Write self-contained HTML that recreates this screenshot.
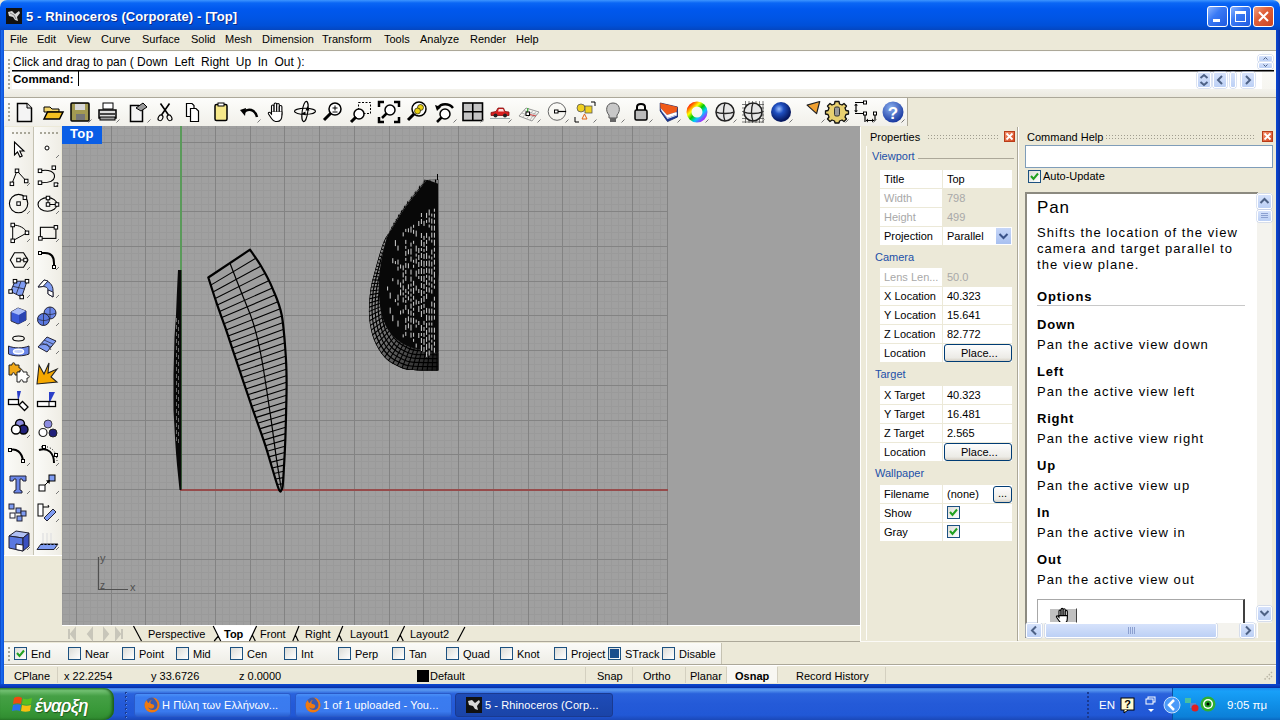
<!DOCTYPE html>
<html><head><meta charset="utf-8"><style>
*{margin:0;padding:0;box-sizing:border-box}
html,body{width:1280px;height:720px;overflow:hidden;background:#ece9d8;font-family:"Liberation Sans",sans-serif;font-size:11px;color:#000}
.a{position:absolute}
.t{position:absolute;white-space:pre;line-height:13px}
svg.a{overflow:visible}
</style></head><body>
<div class="a" style="left:0px;top:0px;width:1280px;height:30px;background:linear-gradient(#3d95ff 0%,#0a66f5 10%,#0058ee 30%,#0055e5 60%,#0050d8 85%,#0446c0 100%);border-radius:7px 7px 0 0"></div>
<svg class="a" style="left:6px;top:8px;" width="16" height="16" viewBox="0 0 16 16"><rect width="16" height="16" fill="#111"/><path d="M2 4 L6 3 L9 6 L13 3 L14 5 L11 9 L12 13 L9 12 L7 9 L3 8 Z" fill="#d8d8d8"/><path d="M4 5 L8 7 L10 11" stroke="#888" fill="none"/></svg>
<div class="t" style="left:26px;top:10px;font-size:13px;font-weight:bold;color:#fff;letter-spacing:0.1px;text-shadow:1px 1px 0 #0a2a8a">5 - Rhinoceros (Corporate) - [Top]</div>
<div class="a" style="left:1207px;top:6px;width:21px;height:21px;background:linear-gradient(135deg,#8ab4ff 0%,#3a7af5 40%,#1f5ae0 100%);border:1px solid #fff;border-radius:3px"></div>
<div class="a" style="left:1213px;top:19px;width:7px;height:3px;background:#fff"></div>
<div class="a" style="left:1230px;top:6px;width:21px;height:21px;background:linear-gradient(135deg,#8ab4ff 0%,#3a7af5 40%,#1f5ae0 100%);border:1px solid #fff;border-radius:3px"></div>
<div class="a" style="left:1235px;top:11px;width:11px;height:11px;border:1px solid #fff;border-top:3px solid #fff"></div>
<div class="a" style="left:1253px;top:6px;width:21px;height:21px;background:linear-gradient(135deg,#f0a080 0%,#e0603a 40%,#cc4420 100%);border:1px solid #fff;border-radius:3px"></div>
<svg class="a" style="left:1253px;top:6px;" width="21" height="21" viewBox="0 0 21 21"><path d="M6 6 L15 15 M15 6 L6 15" stroke="#fff" stroke-width="2"/></svg>
<div class="a" style="left:0px;top:30px;width:4px;height:658px;background:linear-gradient(90deg,#0a3fbc,#1a6cf0 40%,#0b50d8)"></div>
<div class="a" style="left:1276px;top:30px;width:4px;height:658px;background:linear-gradient(90deg,#0a48d0,#0a3cc0 50%,#0a2fa0)"></div>
<div class="a" style="left:0px;top:684px;width:1280px;height:4px;background:linear-gradient(#0b48d0,#0a3cc0 50%,#0a2f9f)"></div>
<div class="a" style="left:4px;top:30px;width:1272px;height:20px;background:#ece9d8"></div>
<div class="a" style="left:4px;top:50px;width:1272px;height:1px;background:#aca899"></div>
<div class="t" style="left:10px;top:33px;font-size:11px;color:#000;">File</div>
<div class="t" style="left:37px;top:33px;font-size:11px;color:#000;">Edit</div>
<div class="t" style="left:67px;top:33px;font-size:11px;color:#000;">View</div>
<div class="t" style="left:101px;top:33px;font-size:11px;color:#000;">Curve</div>
<div class="t" style="left:142px;top:33px;font-size:11px;color:#000;">Surface</div>
<div class="t" style="left:191px;top:33px;font-size:11px;color:#000;">Solid</div>
<div class="t" style="left:225px;top:33px;font-size:11px;color:#000;">Mesh</div>
<div class="t" style="left:262px;top:33px;font-size:11px;color:#000;">Dimension</div>
<div class="t" style="left:322px;top:33px;font-size:11px;color:#000;">Transform</div>
<div class="t" style="left:384px;top:33px;font-size:11px;color:#000;">Tools</div>
<div class="t" style="left:420px;top:33px;font-size:11px;color:#000;">Analyze</div>
<div class="t" style="left:470px;top:33px;font-size:11px;color:#000;">Render</div>
<div class="t" style="left:516px;top:33px;font-size:11px;color:#000;">Help</div>
<div class="a" style="left:4px;top:51px;width:1272px;height:46px;background:linear-gradient(#fcfcfa,#f5f4ee)"></div>
<div class="a" style="left:12px;top:52px;width:1250px;height:37px;background:#fff"></div>
<div class="a" style="left:4px;top:89px;width:1272px;height:8px;background:linear-gradient(#f3f2ec,#ebe9df)"></div>
<div class="a" style="left:4px;top:97px;width:1272px;height:1px;background:#aca899"></div>
<div class="a" style="left:8px;top:59px;width:2px;height:2px;background:#a8a698"></div>
<div class="a" style="left:8px;top:63px;width:2px;height:2px;background:#a8a698"></div>
<div class="a" style="left:8px;top:67px;width:2px;height:2px;background:#a8a698"></div>
<div class="a" style="left:8px;top:71px;width:2px;height:2px;background:#a8a698"></div>
<div class="a" style="left:8px;top:75px;width:2px;height:2px;background:#a8a698"></div>
<div class="a" style="left:8px;top:79px;width:2px;height:2px;background:#a8a698"></div>
<div class="a" style="left:8px;top:83px;width:2px;height:2px;background:#a8a698"></div>
<div class="a" style="left:8px;top:87px;width:2px;height:2px;background:#a8a698"></div>
<div class="t" style="left:13px;top:56px;font-size:12px;color:#000;">Click and drag to pan ( Down  Left  Right  Up  In  Out ):</div>
<div class="a" style="left:12px;top:70px;width:1262px;height:1px;background:#000"></div>
<div class="a" style="left:12px;top:71px;width:1262px;height:1px;background:#777"></div>
<div class="t" style="left:13px;top:72px;font-size:11.6px;font-weight:bold;color:#000;">Command:</div>
<div class="a" style="left:78px;top:71px;width:1px;height:15px;background:#000"></div>
<div class="a" style="left:1258px;top:55px;width:15px;height:7px;background:linear-gradient(#d6e2fb,#bcd0f5);border:1px solid #fff;border-radius:2px;box-shadow:0 0 0 0.5px #b8c8e8"></div>
<svg class="a" style="left:1258px;top:55px" width="15" height="7" viewBox="0 0 15 7"><path d="M5.5 4.5 L7.5 2.5 L9.5 4.5" stroke="#4d6185" fill="none"/></svg>
<div class="a" style="left:1258px;top:62px;width:15px;height:7px;background:linear-gradient(#d6e2fb,#bcd0f5);border:1px solid #fff;border-radius:2px;box-shadow:0 0 0 0.5px #b8c8e8"></div>
<svg class="a" style="left:1258px;top:62px" width="15" height="7" viewBox="0 0 15 7"><path d="M5.5 2.5 L7.5 4.5 L9.5 2.5" stroke="#4d6185" fill="none"/></svg>
<div class="a" style="left:1197px;top:72px;width:14px;height:16px;background:linear-gradient(#d6e2fb,#bcd0f5);border:1px solid #fff;border-radius:2px;box-shadow:0 0 0 0.5px #b8c8e8"></div>
<svg class="a" style="left:1197px;top:72px" width="14" height="16" viewBox="0 0 14 16"><path d="M3.5 6 L7 3 L10.5 6 M3.5 10 L7 13 L10.5 10" stroke="#4d6185" stroke-width="2" fill="none"/></svg>
<div class="a" style="left:1213px;top:72px;width:14px;height:16px;background:linear-gradient(#d6e2fb,#bcd0f5);border:1px solid #fff;border-radius:2px;box-shadow:0 0 0 0.5px #b8c8e8"></div>
<svg class="a" style="left:1213px;top:72px" width="14" height="16" viewBox="0 0 14 16"><path d="M9 4 L5 8 L9 12" stroke="#4d6185" stroke-width="2" fill="none"/></svg>
<div class="a" style="left:1230px;top:72px;width:6px;height:16px;background:linear-gradient(#d6e2fb,#bcd0f5);border:1px solid #fff;border-radius:2px;box-shadow:0 0 0 0.5px #b8c8e8"></div>
<div class="a" style="left:1241px;top:72px;width:14px;height:16px;background:linear-gradient(#d6e2fb,#bcd0f5);border:1px solid #fff;border-radius:2px;box-shadow:0 0 0 0.5px #b8c8e8"></div>
<svg class="a" style="left:1241px;top:72px" width="14" height="16" viewBox="0 0 14 16"><path d="M5 4 L9 8 L5 12" stroke="#4d6185" stroke-width="2" fill="none"/></svg>
<div class="a" style="left:4px;top:98px;width:903px;height:28px;background:linear-gradient(#fdfdfb,#f1f0ea)"></div>
<div class="a" style="left:907px;top:98px;width:369px;height:28px;background:#ece9d8"></div>
<div class="a" style="left:907px;top:97px;width:1px;height:29px;background:#aca899"></div>
<div class="a" style="left:4px;top:126px;width:1272px;height:1px;background:#aca899"></div>
<div class="a" style="left:8px;top:103px;width:2px;height:2px;background:#a8a698"></div>
<div class="a" style="left:8px;top:107px;width:2px;height:2px;background:#a8a698"></div>
<div class="a" style="left:8px;top:111px;width:2px;height:2px;background:#a8a698"></div>
<div class="a" style="left:8px;top:115px;width:2px;height:2px;background:#a8a698"></div>
<div class="a" style="left:8px;top:119px;width:2px;height:2px;background:#a8a698"></div>
<svg class="a" style="left:12px;top:100px" width="24" height="24" viewBox="0 0 24 24"><path d="M5.5 3.5 H15 L19.5 8 V21.5 H5.5 Z" fill="#f4f4f4" stroke="#000" stroke-width="1.5"/><path d="M15 3.5 V8 H19.5" fill="#ddd" stroke="#000"/></svg>
<svg class="a" style="left:41px;top:100px" width="24" height="24" viewBox="0 0 24 24"><path d="M3 7 H9 L11 9 H18 V12 H3 Z" fill="#f2d56a" stroke="#000"/><path d="M3 19 L6.5 12 H22 L18.5 19 Z" fill="#f4c020" stroke="#000" stroke-width="1.5"/></svg>
<svg class="a" style="left:68px;top:100px" width="24" height="24" viewBox="0 0 24 24"><rect x="3" y="3" width="18" height="18" rx="1" fill="#a39a52" stroke="#000" stroke-width="1.5"/><rect x="7" y="4" width="10" height="6" fill="#d8d8d8"/><rect x="8" y="14" width="9" height="6" fill="#777"/><path d="M20.5 22.5 L23.5 19.5" stroke="#777" stroke-width="1"/></svg>
<svg class="a" style="left:96px;top:100px" width="24" height="24" viewBox="0 0 24 24"><rect x="7" y="3" width="10" height="6" fill="#fff" stroke="#000"/><path d="M3 10 H20 V18 H3 Z" fill="#ddd" stroke="#000" stroke-width="1.5"/><rect x="4" y="13" width="15" height="2" fill="#444"/><rect x="4" y="17" width="15" height="3" fill="#999" stroke="#000"/><path d="M20.5 22.5 L23.5 19.5" stroke="#777" stroke-width="1"/></svg>
<svg class="a" style="left:127px;top:100px" width="24" height="24" viewBox="0 0 24 24"><path d="M3.5 5.5 H12 L15.5 9 V21.5 H3.5 Z" fill="#f4f4f4" stroke="#000" stroke-width="1.5"/><path d="M9 8 L16 3 L20 7 L14 11 Z" fill="#999" stroke="#000"/><path d="M20.5 22.5 L23.5 19.5" stroke="#777" stroke-width="1"/></svg>
<svg class="a" style="left:153px;top:100px" width="24" height="24" viewBox="0 0 24 24"><path d="M7.5 3.5 L15.5 15 M16.5 3.5 L8.5 15" stroke="#000" stroke-width="1.6"/><ellipse cx="7.5" cy="17.8" rx="2.2" ry="3" fill="none" stroke="#000" stroke-width="1.1" transform="rotate(30 7.5 17.8)"/><ellipse cx="16.5" cy="17.8" rx="2.2" ry="3" fill="none" stroke="#000" stroke-width="1.1" transform="rotate(-30 16.5 17.8)"/></svg>
<svg class="a" style="left:181px;top:100px" width="24" height="24" viewBox="0 0 24 24"><path d="M5.5 3.5 H11 L13 5.5 V16.5 H5.5 Z" fill="#fff" stroke="#000" stroke-width="1.2"/><path d="M9.5 8.5 H15 L17.5 11 V21.5 H9.5 Z" fill="#fff" stroke="#000" stroke-width="1.2"/></svg>
<svg class="a" style="left:209px;top:100px" width="24" height="24" viewBox="0 0 24 24"><rect x="6" y="4.5" width="12" height="16" rx="1.5" fill="#f7e98a" stroke="#000" stroke-width="1.5"/><rect x="9" y="3" width="6" height="3" fill="#fff" stroke="#000"/></svg>
<svg class="a" style="left:237px;top:100px" width="24" height="24" viewBox="0 0 24 24"><path d="M20 17 C18 9 11 8 7 12" stroke="#000" stroke-width="2.5" fill="none"/><path d="M3 10 L9 8 L8 16 Z" fill="#000"/><path d="M20.5 22.5 L23.5 19.5" stroke="#777" stroke-width="1"/></svg>
<svg class="a" style="left:264px;top:100px" width="24" height="24" viewBox="0 0 24 24"><g fill="#fff" stroke="#000" stroke-width="1.1"><rect x="7.5" y="5" width="2.6" height="10" rx="1.3"/><rect x="10.1" y="3" width="2.6" height="11" rx="1.3"/><rect x="12.7" y="3.5" width="2.6" height="11" rx="1.3"/><rect x="15.3" y="5.5" width="2.6" height="10" rx="1.3"/><path d="M7.5 12 H17.9 V15.5 C17.9 19 16 21.5 13 21.5 H11.5 C9.5 21.5 8.5 20 7.5 18.5 L4.5 14 C3.8 12.8 5.2 11.8 6.2 12.6 L7.5 14 Z"/></g><path d="M8 12.6 H17.4" stroke="#fff" stroke-width="1.5"/></svg>
<svg class="a" style="left:293px;top:100px" width="24" height="24" viewBox="0 0 24 24"><ellipse cx="12" cy="11.3" rx="10.5" ry="3" fill="none" stroke="#000" stroke-width="1.1"/><ellipse cx="12" cy="11.5" rx="2.8" ry="10.2" fill="none" stroke="#000" stroke-width="1.1" transform="rotate(8 12 11.5)"/><path d="M14.5 6 L16.5 10.5 L12.5 10.5 Z M8.5 13.5 L12.5 11.5 L12.5 15.5 Z" fill="#000"/></svg>
<svg class="a" style="left:321px;top:100px" width="24" height="24" viewBox="0 0 24 24"><circle cx="14" cy="9" r="6" fill="#fff" stroke="#000" stroke-width="1.5"/><path d="M10 13 L3 20" stroke="#000" stroke-width="3"/><path d="M11.5 8 H16.5 M14 5.5 V10.5 M11.5 12 H16.5" stroke="#000"/></svg>
<svg class="a" style="left:349px;top:100px" width="24" height="24" viewBox="0 0 24 24"><rect x="9.5" y="2.5" width="12" height="11" fill="none" stroke="#000" stroke-dasharray="2 1.5"/><circle cx="10" cy="14" r="5" fill="#fff" stroke="#000" stroke-width="1.5"/><path d="M7 17 L2 22" stroke="#000" stroke-width="3"/></svg>
<svg class="a" style="left:377px;top:100px" width="24" height="24" viewBox="0 0 24 24"><path d="M2 7 V2 H7 M17 2 H22 V7 M22 17 V22 H17 M7 22 H2 V17" stroke="#000" stroke-width="2.5" fill="none"/><circle cx="13" cy="10" r="5" fill="#fff" stroke="#000" stroke-width="1.5"/><path d="M9.5 13.5 L5 18" stroke="#000" stroke-width="2.5"/></svg>
<svg class="a" style="left:406px;top:100px" width="24" height="24" viewBox="0 0 24 24"><circle cx="13" cy="9" r="7" fill="#fff" stroke="#000" stroke-width="1.5"/><circle cx="14.5" cy="7.5" r="3" fill="#e8d010" stroke="#000" stroke-width="0.6"/><circle cx="11.5" cy="11" r="3" fill="#e8d010" stroke="#000" stroke-width="0.6"/><path d="M8 14 L2 20" stroke="#000" stroke-width="3"/></svg>
<svg class="a" style="left:433px;top:100px" width="24" height="24" viewBox="0 0 24 24"><path d="M20 8 C16 3 8 3 5 8" stroke="#000" stroke-width="2.5" fill="none"/><path d="M2 5 L8 7 L4 11 Z" fill="#000"/><circle cx="12" cy="14" r="5" fill="#fff" stroke="#000" stroke-width="1.5"/><path d="M8.5 17.5 L4 22" stroke="#000" stroke-width="2.5"/><path d="M20.5 22.5 L23.5 19.5" stroke="#777" stroke-width="1"/></svg>
<svg class="a" style="left:460px;top:100px" width="24" height="24" viewBox="0 0 24 24"><rect x="3" y="3" width="19.5" height="17.5" fill="#c4c4c4" stroke="#000" stroke-width="1.6"/><path d="M12.75 3 V20.5 M3 11.75 H22.5" stroke="#000" stroke-width="1.6"/><path d="M20.5 22.5 L23.5 19.5" stroke="#777" stroke-width="1"/></svg>
<svg class="a" style="left:488px;top:100px" width="24" height="24" viewBox="0 0 24 24"><path d="M3 15.5 V12.5 L8 11.5 L10 8 H15.5 L17 11.5 L21 12 V15.5 Z" fill="#d82020" stroke="#801010" stroke-width="0.8"/><circle cx="7.5" cy="15.5" r="2" fill="#222"/><circle cx="17" cy="15.5" r="2" fill="#222"/><path d="M10.8 9 H15 L16 11.5 H10 Z" fill="#fdd"/><path d="M2 18.5 H22" stroke="#9aa"/><path d="M20.5 22.5 L23.5 19.5" stroke="#777" stroke-width="1"/></svg>
<svg class="a" style="left:517px;top:100px" width="24" height="24" viewBox="0 0 24 24"><path d="M2 16 L9 8 L22 12 L15 21 Z" fill="none" stroke="#999"/><path d="M4.5 13 L18 17 M6.8 10.5 L20 14.5 M5.5 17.5 L12 9.5 M9.5 19 L16 10.5 M13 20 L19 11.5" stroke="#aaa" stroke-width="0.8"/><path d="M11 8 L10 13" stroke="#3a3" stroke-width="1.2"/><path d="M11 14 L19 16" stroke="#c44" stroke-width="1.2"/><rect x="9" y="12" width="3.5" height="3.5" fill="#fff" stroke="#000"/><path d="M20.5 22.5 L23.5 19.5" stroke="#777" stroke-width="1"/></svg>
<svg class="a" style="left:545px;top:100px" width="24" height="24" viewBox="0 0 24 24"><circle cx="12" cy="11.5" r="8.8" fill="none" stroke="#666" stroke-width="1"/><rect x="9.5" y="10" width="3.5" height="3" fill="#fff" stroke="#000"/><path d="M13 11.5 H21" stroke="#000" stroke-width="1.2"/><path d="M20.5 22.5 L23.5 19.5" stroke="#777" stroke-width="1"/></svg>
<svg class="a" style="left:573px;top:100px" width="24" height="24" viewBox="0 0 24 24"><circle cx="8" cy="8" r="4" fill="#f0d020" stroke="#555" stroke-width="0.8"/><rect x="12" y="6" width="7" height="7" fill="#f0d020" stroke="#555" stroke-width="0.8"/><path d="M9 19 L11.5 14 L14 19 Z" fill="none" stroke="#e06010"/><path d="M2 17 V22 H6 M18 2 H22 V6" stroke="#000" fill="none"/><path d="M20.5 22.5 L23.5 19.5" stroke="#777" stroke-width="1"/></svg>
<svg class="a" style="left:601px;top:100px" width="24" height="24" viewBox="0 0 24 24"><path d="M8 15 C4 11 5 3 12 3 C19 3 20 11 16 15 V18 H8 Z" fill="#c8c8c8" stroke="#555"/><rect x="9" y="18" width="6" height="4" fill="#666"/><path d="M20.5 22.5 L23.5 19.5" stroke="#777" stroke-width="1"/></svg>
<svg class="a" style="left:629px;top:100px" width="24" height="24" viewBox="0 0 24 24"><path d="M8 11 V7 C8 3 16 3 16 7 V11" stroke="#000" stroke-width="2" fill="none"/><rect x="6" y="10" width="12" height="10" rx="1.5" fill="#bbb" stroke="#000" stroke-width="1.5"/><path d="M20.5 22.5 L23.5 19.5" stroke="#777" stroke-width="1"/></svg>
<svg class="a" style="left:657px;top:100px" width="24" height="24" viewBox="0 0 24 24"><path d="M3.2 3 L20.5 7 V17 L10.5 21.6 L3.2 11 Z" fill="#1a3a9a" stroke="#102060" stroke-width="0.8"/><path d="M3.2 3 L20.5 7 L19.5 12 L10 15 L3.5 8 Z" fill="#f05a18"/><path d="M3.5 8 L10 15 L19.5 12 L20 14.5 L10.5 18 L4.5 11 Z" fill="#fff"/><path d="M4.5 11 L10.5 18 L20 14.5 V15.5 L10.5 19 Z" fill="#e0e0f0"/><path d="M20.5 22.5 L23.5 19.5" stroke="#777" stroke-width="1"/></svg>
<svg class="a" style="left:685px;top:100px" width="24" height="24" viewBox="0 0 24 24"><circle cx="12" cy="12" r="8" fill="none" stroke="url(#cw)" stroke-width="5"/><defs><linearGradient id="cw" x1="0" y1="0" x2="1" y2="1"><stop offset="0" stop-color="#f00"/><stop offset="0.3" stop-color="#ff0"/><stop offset="0.5" stop-color="#0c0"/><stop offset="0.7" stop-color="#0cf"/><stop offset="1" stop-color="#c0f"/></linearGradient></defs><path d="M20.5 22.5 L23.5 19.5" stroke="#777" stroke-width="1"/></svg>
<svg class="a" style="left:713px;top:100px" width="24" height="24" viewBox="0 0 24 24"><circle cx="12" cy="12" r="9" fill="#e6e6e6" stroke="#222" stroke-width="1.5"/><path d="M3 12 C7 14 17 14 21 12 M12 3 C10 8 10 16 12 21" stroke="#222" stroke-width="1.3" fill="none"/><path d="M20.5 22.5 L23.5 19.5" stroke="#777" stroke-width="1"/></svg>
<svg class="a" style="left:741px;top:100px" width="24" height="24" viewBox="0 0 24 24"><path d="M1 4.5 H23 M1 8 H23 M1 11.5 H23 M1 15 H23 M1 18.5 H23 M1 22 H23 M4.5 1 V23 M8 1 V23 M11.5 1 V23 M15 1 V23 M18.5 1 V23 M22 1 V23" stroke="#444" stroke-width="0.7"/><circle cx="12" cy="12" r="9" fill="#e6e6e6" stroke="#222" stroke-width="1.5"/><path d="M3 12 C7 14 17 14 21 12 M12 3 C10 8 10 16 12 21" stroke="#222" stroke-width="1.3" fill="none"/><path d="M20.5 22.5 L23.5 19.5" stroke="#777" stroke-width="1"/></svg>
<svg class="a" style="left:769px;top:100px" width="24" height="24" viewBox="0 0 24 24"><defs><radialGradient id="bs" cx="0.4" cy="0.35" r="0.6"><stop offset="0" stop-color="#9cc0ff"/><stop offset="0.4" stop-color="#1f4fc0"/><stop offset="1" stop-color="#061860"/></radialGradient></defs><circle cx="12" cy="12" r="10" fill="url(#bs)"/><path d="M20.5 22.5 L23.5 19.5" stroke="#777" stroke-width="1"/></svg>
<svg class="a" style="left:801px;top:100px" width="24" height="24" viewBox="0 0 24 24"><path d="M6.1 5.1 L18.7 1.5 L15.6 13.6 Z" fill="#f0a030" stroke="#222" stroke-width="1.2" stroke-linejoin="round"/><path d="M20.5 22.5 L23.5 19.5" stroke="#777" stroke-width="1"/></svg>
<svg class="a" style="left:825px;top:100px" width="24" height="24" viewBox="0 0 24 24"><path d="M10 1.5 H14 L14.5 4 L17 5 L19 3.5 L21.5 6 L20 8 L21 10.5 L23.5 11 V14 L21 14.5 L20 17 L21.5 19 L19 21.5 L17 20 L14.5 21 L14 23 H10 L9.5 21 L7 20 L5 21.5 L2.5 19 L4 17 L3 14.5 L0.5 14 V11 L3 10.5 L4 8 L2.5 6 L5 3.5 L7 5 L9.5 4 Z" fill="#e8d070" stroke="#111" stroke-width="1.3" stroke-linejoin="round"/><rect x="9.5" y="7" width="5" height="9" rx="1.5" fill="#999" stroke="#333"/><path d="M20.5 22.5 L23.5 19.5" stroke="#777" stroke-width="1"/></svg>
<svg class="a" style="left:853px;top:100px" width="24" height="24" viewBox="0 0 24 24"><path d="M2 2.5 H10.5 M2 13.5 H10.5 M3 4.5 V11.5 M12 15 V22 M13 20.5 H21 M22 15 V21" stroke="#000" stroke-width="1.2" fill="none"/><path d="M1 5.5 L3 3.5 L5 5.5 Z M1 10.5 L3 12.5 L5 10.5 Z M15 18.5 L13 20.5 L15 22.5 Z M19 18.5 L21 20.5 L19 22.5 Z" fill="#000"/><rect x="10.5" y="1" width="3" height="3" fill="#fff" stroke="#000"/><rect x="10.5" y="12" width="3" height="3" fill="#fff" stroke="#000"/><rect x="20.5" y="12" width="3" height="3" fill="#fff" stroke="#000"/><path d="M20.5 22.5 L23.5 19.5" stroke="#777" stroke-width="1"/></svg>
<svg class="a" style="left:881px;top:100px" width="24" height="24" viewBox="0 0 24 24"><defs><radialGradient id="hp" cx="0.4" cy="0.3" r="0.7"><stop offset="0" stop-color="#8ab0f0"/><stop offset="1" stop-color="#1838a0"/></radialGradient></defs><circle cx="12" cy="12" r="10.5" fill="url(#hp)"/><text x="12" y="18.5" text-anchor="middle" font-family="Liberation Sans" font-weight="bold" font-size="17" fill="#fff">?</text><path d="M20.5 22.5 L23.5 19.5" stroke="#777" stroke-width="1"/></svg>
<div class="a" style="left:4px;top:126px;width:58px;height:558px;background:#ece9d8"></div>
<div class="a" style="left:5px;top:127px;width:28px;height:428px;background:linear-gradient(90deg,#fbfbf8,#efede5)"></div>
<div class="a" style="left:33px;top:127px;width:1px;height:428px;background:#c5c2b2"></div>
<div class="a" style="left:34px;top:127px;width:27px;height:428px;background:linear-gradient(90deg,#fbfbf8,#efede5)"></div>
<div class="a" style="left:4px;top:555px;width:58px;height:1px;background:#fff"></div>
<div class="a" style="left:12px;top:132px;width:2px;height:2px;background:#a8a698"></div>
<div class="a" style="left:16px;top:132px;width:2px;height:2px;background:#a8a698"></div>
<div class="a" style="left:20px;top:132px;width:2px;height:2px;background:#a8a698"></div>
<div class="a" style="left:24px;top:132px;width:2px;height:2px;background:#a8a698"></div>
<div class="a" style="left:28px;top:132px;width:2px;height:2px;background:#a8a698"></div>
<div class="a" style="left:40px;top:132px;width:2px;height:2px;background:#a8a698"></div>
<div class="a" style="left:44px;top:132px;width:2px;height:2px;background:#a8a698"></div>
<div class="a" style="left:48px;top:132px;width:2px;height:2px;background:#a8a698"></div>
<div class="a" style="left:52px;top:132px;width:2px;height:2px;background:#a8a698"></div>
<div class="a" style="left:56px;top:132px;width:2px;height:2px;background:#a8a698"></div>
<svg class="a" style="left:6px;top:136px" width="24" height="24" viewBox="0 0 24 24"><path d="M8.5 6 V19 L11.5 16 L14 21 L16.2 20 L13.8 15 H18 Z" fill="#fff" stroke="#000" stroke-width="1.1" stroke-linejoin="miter"/></svg>
<svg class="a" style="left:35px;top:136px" width="24" height="24" viewBox="0 0 24 24"><circle cx="12" cy="12" r="2" fill="#fff" stroke="#000"/><path d="M21 22 L24 19" stroke="#777"/></svg>
<svg class="a" style="left:6px;top:164px" width="24" height="24" viewBox="0 0 24 24"><path d="M5.9 19.8 L11 6.8 L20.2 17" stroke="#000" fill="none"/><rect x="4.15" y="18.05" width="3.5" height="3.5" fill="#fff" stroke="#000" stroke-width="1"/><rect x="9.25" y="5.05" width="3.5" height="3.5" fill="#fff" stroke="#000" stroke-width="1"/><rect x="18.45" y="15.25" width="3.5" height="3.5" fill="#fff" stroke="#000" stroke-width="1"/><path d="M21 22 L24 19" stroke="#777"/></svg>
<svg class="a" style="left:35px;top:164px" width="24" height="24" viewBox="0 0 24 24"><path d="M5 6.8 C14 5 20 8 19.5 13 C19 17 14 19 5 18.7" stroke="#000" stroke-width="1.1" fill="none"/><rect x="3.25" y="5.05" width="3.5" height="3.5" fill="#fff" stroke="#000" stroke-width="1"/><rect x="17.05" y="1.9500000000000002" width="3.5" height="3.5" fill="#fff" stroke="#000" stroke-width="1"/><rect x="3.25" y="16.95" width="3.5" height="3.5" fill="#fff" stroke="#000" stroke-width="1"/><rect x="19.15" y="18.85" width="3.5" height="3.5" fill="#fff" stroke="#000" stroke-width="1"/><path d="M21 22 L24 19" stroke="#777"/></svg>
<svg class="a" style="left:6px;top:192px" width="24" height="24" viewBox="0 0 24 24"><circle cx="12.6" cy="11.6" r="9.2" fill="none" stroke="#000" stroke-width="1.1"/><rect x="10.85" y="9.85" width="3.5" height="3.5" fill="#fff" stroke="#000" stroke-width="1"/><rect x="17.15" y="3.95" width="3.5" height="3.5" fill="#fff" stroke="#000" stroke-width="1"/><path d="M21 22 L24 19" stroke="#777"/></svg>
<svg class="a" style="left:35px;top:192px" width="24" height="24" viewBox="0 0 24 24"><ellipse cx="12.5" cy="12.4" rx="9.5" ry="6.8" fill="none" stroke="#000" stroke-width="1.1"/><path d="M13 6 V12.5 H22" stroke="#000" fill="none"/><rect x="11.25" y="4.25" width="3.5" height="3.5" fill="#fff" stroke="#000" stroke-width="1"/><rect x="11.25" y="10.75" width="3.5" height="3.5" fill="#fff" stroke="#000" stroke-width="1"/><rect x="20.25" y="10.75" width="3.5" height="3.5" fill="#fff" stroke="#000" stroke-width="1"/><path d="M21 22 L24 19" stroke="#777"/></svg>
<svg class="a" style="left:6px;top:220px" width="24" height="24" viewBox="0 0 24 24"><path d="M6.7 5 V20.8 L21 12.8 C19 8 13 5 6.7 5" fill="none" stroke="#000" stroke-width="1"/><rect x="4.95" y="3.25" width="3.5" height="3.5" fill="#fff" stroke="#000" stroke-width="1"/><rect x="19.25" y="11.05" width="3.5" height="3.5" fill="#fff" stroke="#000" stroke-width="1"/><rect x="4.95" y="19.05" width="3.5" height="3.5" fill="#fff" stroke="#000" stroke-width="1"/><path d="M21 22 L24 19" stroke="#777"/></svg>
<svg class="a" style="left:35px;top:220px" width="24" height="24" viewBox="0 0 24 24"><rect x="5.4" y="7.3" width="15.5" height="11.1" fill="none" stroke="#000" stroke-width="1.1"/><rect x="3.6500000000000004" y="16.65" width="3.5" height="3.5" fill="#fff" stroke="#000" stroke-width="1"/><rect x="19.15" y="5.55" width="3.5" height="3.5" fill="#fff" stroke="#000" stroke-width="1"/><path d="M21 22 L24 19" stroke="#777"/></svg>
<svg class="a" style="left:6px;top:248px" width="24" height="24" viewBox="0 0 24 24"><path d="M4.3 12 L8.5 4.7 H17.5 L22 12 L17.5 19.3 H8.5 Z" fill="none" stroke="#000" stroke-width="1.1"/><path d="M12.5 12 H19.5" stroke="#000"/><rect x="10.75" y="10.25" width="3.5" height="3.5" fill="#fff" stroke="#000" stroke-width="1"/><rect x="17.75" y="10.25" width="3.5" height="3.5" fill="#fff" stroke="#000" stroke-width="1"/><path d="M21 22 L24 19" stroke="#777"/></svg>
<svg class="a" style="left:35px;top:248px" width="24" height="24" viewBox="0 0 24 24"><path d="M5 5 H10 C16 5 19 9 19 15 V19" stroke="#000" stroke-width="2" fill="none"/><rect x="3.5" y="3.5" width="3" height="3" fill="#fff" stroke="#000" stroke-width="1"/><rect x="17.5" y="17.5" width="3" height="3" fill="#fff" stroke="#000" stroke-width="1"/><path d="M21 22 L24 19" stroke="#777"/></svg>
<svg class="a" style="left:6px;top:276px" width="24" height="24" viewBox="0 0 24 24"><path d="M9 5.2 L21 5.2 L15.7 21 L4.6 15.5 Z" fill="#7f9cf2" stroke="#223" stroke-width="1"/><path d="M6.8 10.3 L18.4 13 M15 5.2 L10.2 18.2" stroke="#223" stroke-width="0.8"/><rect x="7.25" y="3.45" width="3.5" height="3.5" fill="#fff" stroke="#000" stroke-width="1"/><rect x="19.25" y="3.45" width="3.5" height="3.5" fill="#fff" stroke="#000" stroke-width="1"/><rect x="13.95" y="19.25" width="3.5" height="3.5" fill="#fff" stroke="#000" stroke-width="1"/><rect x="2.8499999999999996" y="13.75" width="3.5" height="3.5" fill="#fff" stroke="#000" stroke-width="1"/><path d="M21 22 L24 19" stroke="#777"/></svg>
<svg class="a" style="left:35px;top:276px" width="24" height="24" viewBox="0 0 24 24"><path d="M3 11 L9 4 C14 5 18 9 18 14 V21 L13 18 V14 C13 12 11 10.5 8 10.5 Z" fill="#7f9cf2" stroke="#223"/><path d="M3 11 L9 4 L13 5 L8 10.5 Z" fill="#fff" stroke="#223"/><path d="M13 18 L18 21 V16 L13 14 Z" fill="#fff" stroke="#223"/><path d="M21 22 L24 19" stroke="#777"/></svg>
<svg class="a" style="left:6px;top:304px" width="24" height="24" viewBox="0 0 24 24"><path d="M5 8 L12 4 L20 7 V16 L12 20 L5 17 Z" fill="#3a5ad8" stroke="#334"/><path d="M5 8 L12 4 L20 7 L13 11 Z" fill="#a8bcf8"/><path d="M13 11 L20 7 V16 L13 20 Z" fill="#2a44b0"/><path d="M21 22 L24 19" stroke="#777"/></svg>
<svg class="a" style="left:35px;top:304px" width="24" height="24" viewBox="0 0 24 24"><circle cx="15" cy="9" r="6" fill="#6a86e8" stroke="#223"/><circle cx="8.5" cy="15.5" r="6" fill="#5a78e0" stroke="#223"/><path d="M9 9 C13 11 17 11 21 9 M3 15 C7 17 11 17 14.5 15 M15 3 V15 M8.5 9.5 V21.5" stroke="#223" stroke-width="0.7" fill="none"/><path d="M21 22 L24 19" stroke="#777"/></svg>
<svg class="a" style="left:6px;top:332px" width="24" height="24" viewBox="0 0 24 24"><ellipse cx="12.5" cy="6.5" rx="5.8" ry="2.5" fill="none" stroke="#000" stroke-width="1.1"/><path d="M2.5 14 C8 16.5 17 16.5 23 14 V22 C17 24.5 8 24.5 2.5 22 Z" fill="#6a86e8" stroke="#223"/><ellipse cx="12.5" cy="19.5" rx="5" ry="2.2" fill="#c8d4fa" stroke="#fff" stroke-width="1.5"/></svg>
<svg class="a" style="left:35px;top:332px" width="24" height="24" viewBox="0 0 24 24"><path d="M3 15 L12 5 L21 9 L12 20 Z" fill="#7f9cf2" stroke="#223"/><path d="M7 11 L16 15 M9 8 L18 12 M5 13 L12 12 L16 18" stroke="#223" stroke-width="0.7" fill="none"/><path d="M21 22 L24 19" stroke="#777"/></svg>
<svg class="a" style="left:6px;top:360px" width="24" height="24" viewBox="0 0 24 24"><path d="M3 5 H6 C5.5 2 9.5 2 9 5 H13 V8 C16 7.5 16 11.5 13 11 V15 H9 C9.5 12 5.5 12 6 15 H3 Z" fill="#f0a818" stroke="#222" stroke-width="1"/><path d="M11 12 H14 C13.5 9 17.5 9 17 12 H21 V15 C24 14.5 24 18.5 21 18 V22 H17 C17.5 19 13.5 19 14 22 H11 Z" fill="#fff" stroke="#222" stroke-width="1"/></svg>
<svg class="a" style="left:35px;top:360px" width="24" height="24" viewBox="0 0 24 24"><path d="M2 24 L4 5 L9 14 L14 3 L13 13 L22 9 L16 17 L22 22 Z" fill="#f5a800" stroke="#222" stroke-width="1.1" stroke-linejoin="miter"/></svg>
<svg class="a" style="left:6px;top:388px" width="24" height="24" viewBox="0 0 24 24"><path d="M11 3 H15 L12 14 Z" fill="#2a3ec8"/><rect x="2.5" y="11.5" width="10" height="5" fill="#fff" stroke="#000" stroke-width="1.3"/><path d="M13 17 L16.5 13.5 L22 19 L18.5 22.5 Z" fill="#fff" stroke="#000" stroke-width="1.3"/></svg>
<svg class="a" style="left:35px;top:388px" width="24" height="24" viewBox="0 0 24 24"><path d="M14 4 H20 L14 16 Z" fill="#2a3ec8"/><rect x="2.5" y="13.5" width="18" height="5" fill="#fff" stroke="#000" stroke-width="1.3"/><path d="M14 13 V19" stroke="#000"/></svg>
<svg class="a" style="left:6px;top:416px" width="24" height="24" viewBox="0 0 24 24"><circle cx="14" cy="8" r="4.5" fill="#8c8ce0" stroke="#000" stroke-width="1.4"/><circle cx="17.5" cy="13.5" r="4.5" fill="#20207a" stroke="#000" stroke-width="1.4"/><circle cx="10" cy="13.5" r="4.5" fill="#fff" stroke="#000" stroke-width="1.4"/><path d="M21 22 L24 19" stroke="#777"/></svg>
<svg class="a" style="left:35px;top:416px" width="24" height="24" viewBox="0 0 24 24"><circle cx="13" cy="8" r="4" fill="#8c8ce0" stroke="#222" stroke-width="0.8"/><circle cx="8" cy="16.5" r="4" fill="#fff" stroke="#222" stroke-width="1.2"/><circle cx="18" cy="17" r="4" fill="#20207a" stroke="#222" stroke-width="1"/></svg>
<svg class="a" style="left:6px;top:444px" width="24" height="24" viewBox="0 0 24 24"><path d="M4 6 C10 4 16 8 17 17" stroke="#000" stroke-width="2" fill="none"/><rect x="15.5" y="15.5" width="3" height="3" fill="#fff" stroke="#000" stroke-width="1"/><rect x="2.5" y="4.5" width="3" height="3" fill="#fff" stroke="#000" stroke-width="1"/><path d="M21 22 L24 19" stroke="#777"/></svg>
<svg class="a" style="left:35px;top:444px" width="24" height="24" viewBox="0 0 24 24"><path d="M4 6 C13 3 19 9 19 19" stroke="#000" stroke-width="2" fill="none"/><path d="M6 3 C15 1 22 7 22 17" stroke="#000" stroke-dasharray="1 2" fill="none"/><rect x="7.5" y="1.5" width="3" height="3" fill="#fff" stroke="#000" stroke-width="1"/><rect x="19.5" y="9.5" width="3" height="3" fill="#fff" stroke="#000" stroke-width="1"/><path d="M21 22 L24 19" stroke="#777"/></svg>
<svg class="a" style="left:6px;top:472px" width="24" height="24" viewBox="0 0 24 24"><path d="M4 4 H20 V9 H17 L16 7 H14 V18 L16 19 V21 H8 V19 L10 18 V7 H8 L7 9 H4 Z" fill="#6a86e8" stroke="#223"/><path d="M21 22 L24 19" stroke="#777"/></svg>
<svg class="a" style="left:35px;top:472px" width="24" height="24" viewBox="0 0 24 24"><rect x="4" y="13" width="6" height="6" fill="#fff" stroke="#000"/><rect x="14" y="3" width="6" height="6" fill="#7f9cf2" stroke="#000"/><path d="M10 13 L15 8" stroke="#000"/><path d="M15 8 L11 8.5 L14.5 12 Z" fill="#000"/><path d="M21 22 L24 19" stroke="#777"/></svg>
<svg class="a" style="left:6px;top:500px" width="24" height="24" viewBox="0 0 24 24"><rect x="3" y="4" width="5" height="5" fill="#7f9cf2" stroke="#223"/><rect x="10" y="8" width="5" height="5" fill="#7f9cf2" stroke="#223"/><rect x="4" y="13" width="5" height="5" fill="#fff" stroke="#223"/><rect x="15" y="11" width="5" height="5" fill="#7f9cf2" stroke="#223"/><rect x="11" y="16" width="5" height="5" fill="#7f9cf2" stroke="#223"/></svg>
<svg class="a" style="left:35px;top:500px" width="24" height="24" viewBox="0 0 24 24"><rect x="3" y="4" width="5" height="12" fill="#fff" stroke="#000"/><path d="M8 7 H14 L13 5" stroke="#000" fill="none"/><path d="M9 18 L18 9 L21 12 L12 21 Z" fill="#7f9cf2" stroke="#223"/><path d="M21 22 L24 19" stroke="#777"/></svg>
<svg class="a" style="left:6px;top:528px" width="24" height="24" viewBox="0 0 24 24"><path d="M3 8 L10 3 L23 5 L17 10 Z" fill="#b0c0f4" stroke="#223"/><path d="M3 8 L17 10 V23 L3 20 Z" fill="#5a78e0" stroke="#223"/><path d="M17 10 L23 5 V18 L17 23 Z" fill="#3a50c0" stroke="#223"/><path d="M10 16 L17 17 V23 L10 21.5 Z" fill="#fff" stroke="#223"/><path d="M21 22 L24 19" stroke="#777"/></svg>
<svg class="a" style="left:35px;top:528px" width="24" height="24" viewBox="0 0 24 24"><path d="M8 5 V15 M12 5 V15 M16 5 V15" stroke="#e4e4e4" stroke-width="1.5"/><path d="M2 21.5 L6 16 H23 L19 21.5 Z" fill="#7f9cf2" stroke="#223"/><path d="M6 16.5 H22" stroke="#000" stroke-dasharray="2 1.5"/><path d="M21 22 L24 19" stroke="#777"/></svg>
<svg class="a" style="left:62px;top:126px;overflow:hidden" width="798" height="499" viewBox="0 0 798 499"><rect width="798" height="499" fill="#a0a0a0"/><path d="M0.5 0 V499M7.5 0 V499M21.5 0 V499M28.5 0 V499M35.5 0 V499M42.5 0 V499M55.5 0 V499M62.5 0 V499M69.5 0 V499M76.5 0 V499M90.5 0 V499M97.5 0 V499M104.5 0 V499M111.5 0 V499M125.5 0 V499M132.5 0 V499M139.5 0 V499M146.5 0 V499M160.5 0 V499M167.5 0 V499M174.5 0 V499M181.5 0 V499M194.5 0 V499M201.5 0 V499M208.5 0 V499M215.5 0 V499M229.5 0 V499M236.5 0 V499M243.5 0 V499M250.5 0 V499M264.5 0 V499M271.5 0 V499M278.5 0 V499M285.5 0 V499M299.5 0 V499M306.5 0 V499M313.5 0 V499M320.5 0 V499M333.5 0 V499M340.5 0 V499M347.5 0 V499M354.5 0 V499M368.5 0 V499M375.5 0 V499M382.5 0 V499M389.5 0 V499M403.5 0 V499M410.5 0 V499M417.5 0 V499M424.5 0 V499M438.5 0 V499M445.5 0 V499M452.5 0 V499M459.5 0 V499M472.5 0 V499M479.5 0 V499M486.5 0 V499M493.5 0 V499M507.5 0 V499M514.5 0 V499M521.5 0 V499M528.5 0 V499M542.5 0 V499M549.5 0 V499M556.5 0 V499M563.5 0 V499M577.5 0 V499M584.5 0 V499M591.5 0 V499M598.5 0 V499M0 2.5 H606M0 9.5 H606M0 22.5 H606M0 29.5 H606M0 36.5 H606M0 43.5 H606M0 57.5 H606M0 64.5 H606M0 71.5 H606M0 78.5 H606M0 92.5 H606M0 99.5 H606M0 106.5 H606M0 113.5 H606M0 127.5 H606M0 134.5 H606M0 141.5 H606M0 148.5 H606M0 161.5 H606M0 168.5 H606M0 175.5 H606M0 182.5 H606M0 196.5 H606M0 203.5 H606M0 210.5 H606M0 217.5 H606M0 231.5 H606M0 238.5 H606M0 245.5 H606M0 252.5 H606M0 266.5 H606M0 273.5 H606M0 280.5 H606M0 287.5 H606M0 300.5 H606M0 307.5 H606M0 314.5 H606M0 321.5 H606M0 335.5 H606M0 342.5 H606M0 349.5 H606M0 356.5 H606M0 370.5 H606M0 377.5 H606M0 384.5 H606M0 391.5 H606M0 405.5 H606M0 412.5 H606M0 419.5 H606M0 426.5 H606M0 439.5 H606M0 446.5 H606M0 453.5 H606M0 460.5 H606M0 474.5 H606M0 481.5 H606M0 488.5 H606M0 495.5 H606" stroke="#9a9a9a" stroke-width="1" shape-rendering="crispEdges"/><path d="M14.5 0 V499M49.5 0 V499M83.5 0 V499M118.5 0 V499M153.5 0 V499M188.5 0 V499M222.5 0 V499M257.5 0 V499M292.5 0 V499M327.5 0 V499M361.5 0 V499M396.5 0 V499M431.5 0 V499M466.5 0 V499M500.5 0 V499M535.5 0 V499M570.5 0 V499M605.5 0 V499M0 16.5 H606M0 50.5 H606M0 85.5 H606M0 120.5 H606M0 155.5 H606M0 189.5 H606M0 224.5 H606M0 259.5 H606M0 294.5 H606M0 328.5 H606M0 363.5 H606M0 398.5 H606M0 433.5 H606M0 467.5 H606" stroke="#838383" stroke-width="1" shape-rendering="crispEdges"/><path d="M118.5 0 V363" stroke="#5a9a5a" stroke-width="2" shape-rendering="crispEdges"/><path d="M118 363.5 H606" stroke="#964b4b" stroke-width="2" shape-rendering="crispEdges"/><path d="M116.0 144.0 L115.5 154.0 L114.7 171.5 L114.0 189.0 L112.5 210.7 L111.5 249.0 L111.5 284.0 L113.0 312.0 L114.0 327.0 L115.0 339.0 L117.5 364.0 L119.5 364.0 L119.5 144.0 Z" fill="#0a0a0a"/><path d="M114.5 192 v4 M116.5 194 v4M114.5 199 v4 M116.5 201 v4M114.5 206 v4 M116.5 208 v4M114.5 213 v4 M116.5 215 v4M114.5 220 v4 M116.5 222 v4M114.5 227 v4 M116.5 229 v4M114.5 234 v4 M116.5 236 v4M114.5 241 v4 M116.5 243 v4M114.5 248 v4 M116.5 250 v4M114.5 255 v4 M116.5 257 v4M114.5 262 v4 M116.5 264 v4M114.5 269 v4 M116.5 271 v4M114.5 276 v4 M116.5 278 v4M114.5 283 v4 M116.5 285 v4M114.5 290 v4 M116.5 292 v4M114.5 297 v4 M116.5 299 v4M114.5 304 v4 M116.5 306 v4M114.5 311 v4 M116.5 313 v4" stroke="#6a6a6a" stroke-width="1"/><path d="M146.3 151.5 C147.7 155.8 151.9 169.1 154.7 177.3 C157.5 185.5 159.9 191.8 163.0 200.7 C166.1 209.6 168.5 217.3 173.0 230.7 C177.5 244.1 184.9 266.3 189.9 280.9 C194.9 295.5 198.6 304.9 203.0 318.4 C207.4 331.8 213.4 354.0 216.2 361.6 C218.9 369.2 218.9 363.6 219.5 364.0 L219.5 364.0 C219.7 363.2 220.3 365.0 220.8 359.0 C221.3 353.0 222.2 337.4 222.7 327.8 C223.2 318.2 223.4 313.0 223.7 301.5 C224.0 290.0 224.6 270.8 224.6 259.0 C224.6 247.2 224.6 242.4 223.8 230.7 C223.0 219.0 221.9 200.4 219.7 189.0 C217.5 177.6 213.9 170.5 210.5 162.3 C207.1 154.1 202.8 146.4 199.0 140.0 C195.2 133.6 189.8 126.4 188.0 123.7 Z" fill="#9e9e9e" stroke="none"/><path d="M148.8 159.1 L193.8 132.3M151.0 166.0 L199.0 140.0M153.2 172.6 L202.9 147.5M155.3 179.0 L206.7 154.8M157.6 185.4 L210.4 162.0M159.8 191.6 L212.8 169.1M162.0 197.8 L215.3 176.1M164.1 204.0 L217.6 183.0M166.1 210.0 L219.8 189.9M168.1 216.1 L220.5 196.7M170.1 222.0 L221.1 203.5M172.1 228.0 L221.8 210.2M174.1 233.9 L222.4 216.9M176.1 239.8 L223.1 223.5M178.0 245.6 L223.7 230.2M180.0 251.5 L224.0 236.7M181.9 257.3 L224.2 243.3M183.9 263.0 L224.3 249.8M185.8 268.8 L224.5 256.3M187.8 274.5 L224.5 262.8M189.7 280.2 L224.4 269.3M191.7 285.9 L224.2 275.7M193.6 291.6 L224.1 282.1M195.6 297.2 L224.0 288.5M197.6 302.9 L223.8 294.9M199.5 308.5 L223.7 301.2M201.5 314.1 L223.5 307.6M203.4 319.7 L223.2 313.9M205.1 325.3 L223.0 320.2M206.8 330.9 L222.7 326.5M208.5 336.4 L222.4 332.8M210.2 342.0 L222.0 339.1M211.9 347.5 L221.6 345.3M213.6 353.0 L221.3 351.6M215.3 358.5 L220.9 357.8" stroke="#000" stroke-width="1.1"/><path d="M168.0 137.3 C169.9 142.3 175.8 157.3 179.7 167.3 C183.6 177.3 188.0 186.5 191.3 197.3 C194.6 208.1 196.6 216.5 199.5 232.0 C202.4 247.5 206.1 273.7 208.6 290.3 C211.1 306.9 212.5 319.3 214.3 331.6 C216.1 343.9 218.6 358.6 219.5 364.0" stroke="#000" stroke-width="1.2" fill="none"/><path d="M146.3 151.5 C147.7 155.8 151.9 169.1 154.7 177.3 C157.5 185.5 159.9 191.8 163.0 200.7 C166.1 209.6 168.5 217.3 173.0 230.7 C177.5 244.1 184.9 266.3 189.9 280.9 C194.9 295.5 198.6 304.9 203.0 318.4 C207.4 331.8 213.4 354.0 216.2 361.6 C218.9 369.2 218.9 363.6 219.5 364.0 L219.5 364.0 C219.7 363.2 220.3 365.0 220.8 359.0 C221.3 353.0 222.2 337.4 222.7 327.8 C223.2 318.2 223.4 313.0 223.7 301.5 C224.0 290.0 224.6 270.8 224.6 259.0 C224.6 247.2 224.6 242.4 223.8 230.7 C223.0 219.0 221.9 200.4 219.7 189.0 C217.5 177.6 213.9 170.5 210.5 162.3 C207.1 154.1 202.8 146.4 199.0 140.0 C195.2 133.6 189.8 126.4 188.0 123.7 Z" fill="none" stroke="#000" stroke-width="2.2" stroke-linejoin="round"/><defs><clipPath id="tc"><path d="M364.3 54.0 C363.0 55.7 360.1 59.5 356.3 64.4 C352.5 69.3 346.1 77.1 341.7 83.4 C337.3 89.7 333.4 96.7 330.0 102.3 C326.6 107.9 324.2 109.6 321.3 116.9 C318.4 124.2 314.8 137.8 312.6 146.0 C310.4 154.2 309.1 158.9 308.2 165.9 C307.3 172.8 306.8 180.9 307.0 187.7 C307.2 194.5 308.3 201.1 309.7 206.7 C311.1 212.3 313.1 216.9 315.5 221.3 C317.9 225.7 320.8 229.8 324.2 232.9 C327.6 236.0 332.0 238.4 335.9 240.2 C339.8 242.0 341.0 243.2 347.6 243.9 C354.2 244.6 370.9 244.4 375.5 244.5 L376.5 244.5 L376.5 53.5 Z"/></clipPath><clipPath id="band"><path d="M364.3 54.0 C363.0 55.7 360.1 59.5 356.3 64.4 C352.5 69.3 346.1 77.1 341.7 83.4 C337.3 89.7 333.4 96.7 330.0 102.3 C326.6 107.9 324.2 109.6 321.3 116.9 C318.4 124.2 314.8 137.8 312.6 146.0 C310.4 154.2 309.1 158.9 308.2 165.9 C307.3 172.8 306.8 180.9 307.0 187.7 C307.2 194.5 308.3 201.1 309.7 206.7 C311.1 212.3 313.1 216.9 315.5 221.3 C317.9 225.7 320.8 229.8 324.2 232.9 C327.6 236.0 332.0 238.4 335.9 240.2 C339.8 242.0 341.0 243.2 347.6 243.9 C354.2 244.6 370.9 244.4 375.5 244.5 L376.5 244.5 L376.5 53.5 Z M363.0 53.0 C361.7 54.7 358.8 58.1 355.0 63.0 C351.2 67.9 344.8 76.0 340.5 82.5 C336.2 89.0 332.1 95.4 329.0 102.0 C325.9 108.6 324.0 113.7 322.0 122.0 C320.0 130.3 317.7 142.3 317.0 152.0 C316.3 161.7 317.0 172.3 318.0 180.0 C319.0 187.7 320.7 192.8 323.0 198.0 C325.3 203.2 327.8 207.2 332.0 211.0 C336.2 214.8 340.7 218.3 348.0 221.0 C355.3 223.7 371.3 226.0 376.0 227.0 L377.0 226.0 L377.0 58.0 Z" clip-rule="evenodd"/></clipPath><linearGradient id="bg1" x1="0" y1="0" x2="1" y2="1"><stop offset="0" stop-color="#9a9a9a"/><stop offset="0.45" stop-color="#8a8a8a"/><stop offset="0.8" stop-color="#3a3a3a"/><stop offset="1" stop-color="#101010"/></linearGradient></defs><path d="M364.3 54.0 C363.0 55.7 360.1 59.5 356.3 64.4 C352.5 69.3 346.1 77.1 341.7 83.4 C337.3 89.7 333.4 96.7 330.0 102.3 C326.6 107.9 324.2 109.6 321.3 116.9 C318.4 124.2 314.8 137.8 312.6 146.0 C310.4 154.2 309.1 158.9 308.2 165.9 C307.3 172.8 306.8 180.9 307.0 187.7 C307.2 194.5 308.3 201.1 309.7 206.7 C311.1 212.3 313.1 216.9 315.5 221.3 C317.9 225.7 320.8 229.8 324.2 232.9 C327.6 236.0 332.0 238.4 335.9 240.2 C339.8 242.0 341.0 243.2 347.6 243.9 C354.2 244.6 370.9 244.4 375.5 244.5 L376.5 244.5 L376.5 53.5 Z" fill="#080808"/><g clip-path="url(#band)"><rect x="298" y="49" width="80" height="200" fill="url(#bg1)"/><path d="M364.3 54.0 C363.0 55.7 360.1 59.5 356.3 64.4 C352.5 69.3 346.1 77.1 341.7 83.4 C337.3 89.7 333.4 96.7 330.0 102.3 C326.6 107.9 324.2 109.6 321.3 116.9 C318.4 124.2 314.8 137.8 312.6 146.0 C310.4 154.2 309.1 158.9 308.2 165.9 C307.3 172.8 306.8 180.9 307.0 187.7 C307.2 194.5 308.3 201.1 309.7 206.7 C311.1 212.3 313.1 216.9 315.5 221.3 C317.9 225.7 320.8 229.8 324.2 232.9 C327.6 236.0 332.0 238.4 335.9 240.2 C339.8 242.0 341.0 243.2 347.6 243.9 C354.2 244.6 370.9 244.4 375.5 244.5 M364.8 58.6 C363.5 60.3 360.7 63.9 357.1 68.6 C353.5 73.2 347.4 80.7 343.2 86.7 C339.0 92.7 335.3 99.4 332.0 104.8 C328.8 110.1 326.5 111.7 323.7 118.7 C320.9 125.7 317.5 138.7 315.4 146.5 C313.3 154.3 312.1 158.9 311.2 165.5 C310.3 172.1 309.8 179.8 310.1 186.3 C310.3 192.8 311.3 199.1 312.6 204.5 C314.0 209.8 315.9 214.2 318.2 218.4 C320.5 222.6 323.2 226.5 326.5 229.5 C329.7 232.5 333.9 234.7 337.7 236.5 C341.4 238.2 342.5 239.3 348.8 240.0 C355.1 240.7 371.0 240.5 375.5 240.6 M365.3 63.3 C364.0 64.8 361.4 68.3 358.0 72.7 C354.6 77.2 348.7 84.3 344.7 90.0 C340.7 95.8 337.1 102.1 334.1 107.2 C331.0 112.3 328.8 113.9 326.1 120.5 C323.5 127.1 320.2 139.6 318.2 147.0 C316.2 154.4 315.1 158.8 314.2 165.1 C313.4 171.4 312.9 178.7 313.1 184.9 C313.3 191.1 314.3 197.1 315.6 202.2 C316.9 207.3 318.7 211.5 320.9 215.5 C323.1 219.5 325.7 223.2 328.8 226.1 C331.9 228.9 335.9 231.0 339.4 232.7 C343.0 234.4 344.1 235.4 350.1 236.1 C356.1 236.7 371.2 236.5 375.5 236.6 M365.7 67.9 C364.6 69.4 362.1 72.7 358.8 76.9 C355.6 81.1 350.0 87.9 346.2 93.3 C342.4 98.8 339.0 104.9 336.1 109.7 C333.1 114.5 331.1 116.0 328.5 122.3 C326.0 128.6 322.9 140.4 321.0 147.5 C319.1 154.5 318.0 158.7 317.2 164.7 C316.4 170.7 316.0 177.7 316.2 183.6 C316.4 189.4 317.3 195.1 318.5 200.0 C319.7 204.8 321.4 208.8 323.5 212.6 C325.6 216.4 328.1 219.9 331.1 222.7 C334.0 225.4 337.8 227.4 341.2 229.0 C344.6 230.6 345.6 231.5 351.3 232.2 C357.0 232.8 371.4 232.6 375.4 232.7 M366.2 72.5 C365.1 74.0 362.8 77.0 359.7 81.1 C356.6 85.1 351.3 91.5 347.7 96.6 C344.1 101.8 340.9 107.6 338.1 112.1 C335.3 116.7 333.3 118.1 331.0 124.1 C328.6 130.1 325.6 141.3 323.8 148.0 C322.0 154.7 321.0 158.6 320.2 164.3 C319.5 170.0 319.0 176.6 319.2 182.2 C319.4 187.8 320.3 193.2 321.5 197.8 C322.6 202.3 324.2 206.1 326.2 209.7 C328.2 213.3 330.6 216.7 333.3 219.2 C336.1 221.8 339.7 223.7 342.9 225.2 C346.1 226.7 347.1 227.7 352.5 228.3 C357.9 228.8 371.6 228.7 375.4 228.8 M366.7 77.2 C365.7 78.5 363.4 81.4 360.5 85.2 C357.6 89.0 352.6 95.1 349.2 100.0 C345.8 104.9 342.8 110.3 340.1 114.6 C337.5 118.9 335.6 120.3 333.4 125.9 C331.1 131.6 328.3 142.1 326.6 148.5 C324.9 154.8 324.0 158.5 323.2 163.9 C322.5 169.3 322.1 175.5 322.3 180.8 C322.5 186.1 323.3 191.2 324.4 195.5 C325.5 199.9 327.0 203.4 328.9 206.8 C330.8 210.2 333.0 213.4 335.6 215.8 C338.3 218.3 341.7 220.1 344.7 221.5 C347.7 222.9 348.7 223.8 353.8 224.3 C358.9 224.9 371.8 224.7 375.4 224.8 M367.2 81.8 C366.2 83.1 364.1 85.8 361.3 89.4 C358.6 93.0 353.9 98.7 350.7 103.3 C347.5 107.9 344.6 113.0 342.1 117.1 C339.7 121.1 337.9 122.4 335.8 127.7 C333.7 133.0 331.0 143.0 329.4 149.0 C327.9 154.9 326.9 158.4 326.2 163.5 C325.6 168.6 325.2 174.4 325.4 179.4 C325.5 184.4 326.3 189.2 327.3 193.3 C328.4 197.4 329.8 200.8 331.6 203.9 C333.3 207.1 335.4 210.1 337.9 212.4 C340.4 214.7 343.6 216.4 346.5 217.7 C349.3 219.1 350.2 219.9 355.0 220.4 C359.8 221.0 372.0 220.8 375.4 220.9" stroke="#000" stroke-width="1.2" fill="none"/><path d="M375.0 157.0 L375.0 277.0M375.0 157.0 L368.3 276.8M375.0 157.0 L361.6 276.3M375.0 157.0 L355.0 275.3M375.0 157.0 L348.4 274.0M375.0 157.0 L341.9 272.4M375.0 157.0 L335.5 270.3M375.0 157.0 L329.3 267.9M375.0 157.0 L323.1 265.2M375.0 157.0 L317.2 262.2M375.0 157.0 L311.4 258.8M375.0 157.0 L305.8 255.1M375.0 157.0 L300.5 251.0M375.0 157.0 L295.3 246.7M375.0 157.0 L290.4 242.1M375.0 157.0 L285.8 237.3M375.0 157.0 L281.5 232.2M375.0 157.0 L277.4 226.9M375.0 157.0 L273.7 221.3M375.0 157.0 L270.2 215.5M375.0 157.0 L267.1 209.6M375.0 157.0 L264.4 203.5M375.0 157.0 L262.0 197.3M375.0 157.0 L259.9 190.9M375.0 157.0 L258.2 184.4M375.0 157.0 L256.8 177.8M375.0 157.0 L255.8 171.2M375.0 157.0 L255.2 164.5M375.0 157.0 L255.0 157.8M375.0 157.0 L255.1 151.1M375.0 157.0 L255.7 144.5M375.0 157.0 L256.5 137.8M375.0 157.0 L257.8 131.2M375.0 157.0 L259.4 124.7M375.0 157.0 L261.4 118.3M375.0 157.0 L263.7 112.0M375.0 157.0 L266.4 105.9M375.0 157.0 L269.4 99.9M375.0 157.0 L272.8 94.1M375.0 157.0 L276.5 88.5M375.0 157.0 L280.4 83.1M375.0 157.0 L284.7 78.0M375.0 157.0 L289.3 73.0M375.0 157.0 L294.1 68.4M375.0 157.0 L299.2 64.0M375.0 157.0 L304.5 59.9M375.0 157.0 L310.0 56.1M375.0 157.0 L315.7 52.7M375.0 157.0 L321.6 49.5M375.0 157.0 L327.7 46.7M375.0 157.0 L334.0 44.2M375.0 157.0 L340.3 42.1M375.0 157.0 L346.8 40.4M375.0 157.0 L353.3 39.0M375.0 157.0 L360.0 37.9M375.0 157.0 L366.6 37.3M375.0 157.0 L373.3 37.0M375.0 157.0 L380.0 37.1M375.0 157.0 L386.7 37.6M375.0 157.0 L393.4 38.4" stroke="#000" stroke-width="1.1"/></g><path d="M372.4 82.7 v3M372.4 87.7 v4M372.4 93.7 v4M372.4 99.7 v5M372.4 106.7 v5M372.4 113.7 v6M372.4 121.7 v4M372.4 127.7 v4M372.4 133.7 v5M372.4 140.7 v3M372.4 145.7 v6M372.4 153.7 v4M372.4 159.7 v3M372.4 170.7 v4M372.4 176.7 v5M372.4 183.7 v4M372.4 189.7 v4M372.4 201.7 v5M372.4 208.7 v5M372.4 215.7 v4M372.4 221.7 v5M369.8 87.6 v3M369.8 92.6 v5M369.8 99.6 v5M369.8 106.6 v5M369.8 113.6 v3M369.8 123.6 v5M369.8 130.6 v3M369.8 135.6 v5M369.8 142.6 v6M369.8 150.6 v5M369.8 157.6 v4M369.8 163.6 v4M369.8 175.6 v5M369.8 182.6 v5M369.8 189.6 v5M369.8 196.6 v3M369.8 201.6 v5M369.8 208.6 v3M369.8 213.6 v3M369.8 218.6 v6M367.2 83.5 v6M367.2 91.5 v5M367.2 98.5 v3M367.2 110.5 v4M367.2 129.5 v3M367.2 134.5 v6M367.2 142.5 v5M367.2 149.5 v5M367.2 156.5 v3M367.2 161.5 v5M367.2 182.5 v5M367.2 189.5 v5M367.2 196.5 v3M367.2 201.5 v5M367.2 208.5 v6M367.2 216.5 v6M367.2 224.5 v5M364.6 86.9 v5M364.6 93.9 v3M364.6 106.9 v5M364.6 113.9 v4M364.6 119.9 v5M364.6 126.9 v6M364.6 134.9 v5M364.6 141.9 v5M364.6 148.9 v3M364.6 153.9 v5M364.6 160.9 v5M364.6 167.9 v5M364.6 181.9 v5M364.6 188.9 v6M364.6 196.9 v5M364.6 203.9 v5M364.6 210.9 v5M364.6 217.9 v6M364.6 225.9 v5M362.0 94.9 v5M362.0 109.9 v4M362.0 115.9 v5M362.0 122.9 v3M362.0 127.9 v5M362.0 134.9 v6M362.0 142.9 v5M362.0 149.9 v6M362.0 157.9 v5M362.0 164.9 v3M362.0 169.9 v6M362.0 177.9 v4M362.0 183.9 v4M362.0 194.9 v4M362.0 200.9 v4M362.0 206.9 v4M362.0 212.9 v6M362.0 220.9 v5M359.4 87.0 v4M359.4 93.0 v5M359.4 107.0 v5M359.4 114.0 v6M359.4 122.0 v3M359.4 127.0 v5M359.4 134.0 v6M359.4 142.0 v6M359.4 150.0 v5M359.4 157.0 v5M359.4 164.0 v6M359.4 172.0 v5M359.4 179.0 v4M359.4 185.0 v6M359.4 199.0 v6M359.4 207.0 v3M359.4 212.0 v5M359.4 219.0 v6M356.8 95.0 v5M356.8 122.0 v5M356.8 129.0 v5M356.8 136.0 v5M356.8 143.0 v5M356.8 150.0 v3M356.8 163.0 v4M356.8 175.0 v3M356.8 180.0 v6M356.8 195.0 v4M356.8 207.0 v5M354.2 104.6 v6M354.2 119.6 v6M354.2 127.6 v3M354.2 132.6 v5M354.2 144.6 v6M354.2 159.6 v5M354.2 173.6 v5M354.2 193.6 v3M354.2 198.6 v3M354.2 217.6 v4M351.6 98.8 v3M351.6 103.8 v4M351.6 114.8 v3M351.6 133.8 v3M351.6 138.8 v3M351.6 154.8 v5M351.6 161.8 v6M351.6 169.8 v4M351.6 175.8 v4M351.6 181.8 v3M351.6 186.8 v3M351.6 191.8 v6M351.6 206.8 v4M351.6 212.8 v3M349.0 100.6 v6M349.0 116.6 v4M349.0 122.6 v6M349.0 130.6 v5M349.0 143.6 v5M349.0 150.6 v5M349.0 157.6 v3M349.0 162.6 v3M349.0 167.6 v3M349.0 172.6 v3M349.0 177.6 v5M349.0 184.6 v5M349.0 191.6 v5M349.0 198.6 v6M349.0 206.6 v5M346.4 102.3 v4M346.4 123.3 v5M346.4 137.3 v5M346.4 158.3 v5M346.4 165.3 v3M346.4 170.3 v4M346.4 183.3 v5M346.4 190.3 v5M346.4 197.3 v5M343.8 102.9 v3M343.8 113.9 v4M343.8 119.9 v3M343.8 124.9 v5M343.8 131.9 v3M343.8 136.9 v5M343.8 143.9 v4M343.8 149.9 v5M343.8 162.9 v4M343.8 168.9 v3M343.8 173.9 v3M343.8 178.9 v5M343.8 191.9 v5M343.8 198.9 v5M343.8 205.9 v4M341.2 106.4 v4M341.2 139.4 v5M341.2 146.4 v5M341.2 153.4 v4M341.2 159.4 v5M341.2 166.4 v3M341.2 171.4 v5M341.2 183.4 v4M341.2 208.4 v3M338.6 138.5 v4M338.6 156.5 v5M338.6 163.5 v6M338.6 184.5 v4M336.0 119.6 v5M336.0 133.6 v5M336.0 140.6 v4M336.0 153.6 v5M336.0 168.6 v6M336.0 176.6 v3M336.0 194.6 v6M333.4 114.1 v6M333.4 135.1 v3M333.4 173.1 v3M330.8 132.2 v5M330.8 152.2 v3M330.8 189.2 v6M328.2 166.6 v6M328.2 181.6 v6M325.6 160.5 v4" stroke="#d4d4d4" stroke-width="1" clip-path="url(#tc)"/><path d="M375.5 48.0 L375.5 54.0" stroke="#000"/><path d="M36.5 431.0 L36.5 463.5 L66.0 463.5" stroke="#505050" stroke-width="1.2" fill="none"/><text x="38" y="436" font-family="Liberation Sans" font-size="11" fill="#505050">y</text><text x="38" y="463" font-family="Liberation Sans" font-size="10" fill="#505050">z</text><text x="68" y="465" font-family="Liberation Sans" font-size="11" fill="#505050">x</text></svg>
<div class="a" style="left:62px;top:126px;width:40px;height:18px;background:#0a5ee6"></div>
<div class="t" style="left:70px;top:127px;font-size:13px;font-weight:bold;color:#fff;letter-spacing:0.3px">Top</div>
<div class="a" style="left:62px;top:625px;width:798px;height:1px;background:#fff"></div>
<div class="a" style="left:62px;top:626px;width:798px;height:16px;background:#ece9d8"></div>
<div class="a" style="left:4px;top:641px;width:856px;height:1px;background:#aca899"></div>
<svg class="a" style="left:66px;top:628px;" width="64" height="12" viewBox="0 0 64 12"><path d="M3 1 V11 M9 1 L5 6 L9 11 Z M26 1 L22 6 L26 11 Z M38 1 L42 6 L38 11 Z M56 1 V11 M50 1 L54 6 L50 11 Z" fill="#c8c6ba" stroke="#c8c6ba" stroke-width="2"/></svg>
<svg class="a" style="left:0;top:0" width="1280" height="720" viewBox="0 0 1280 720"><path d="M213.2 626 L220.7 641 H249.4 L256.6 626 Z" fill="#fff"/><path d="M133.5 626 L141.5 641 M213.2 626 L220.7 641 M218.4 636 L214.2 641 M256.6 626 L249.4 641 M252.28 635 L255.28 641 M299 626 L292.8 641 M295.28000000000003 635 L298.28000000000003 641 M342.8 626 L336.6 641 M339.08000000000004 635 L342.08000000000004 641 M404.6 626 L397.3 641 M400.22 635 L403.22 641 M464.9 627 L457.5 641" stroke="#000" stroke-width="1.2" fill="none"/></svg>
<div class="t" style="left:148px;top:628px;font-size:11px;color:#000;">Perspective</div>
<div class="t" style="left:224px;top:628px;font-size:11px;font-weight:bold;color:#000;">Top</div>
<div class="t" style="left:260px;top:628px;font-size:11px;color:#000;">Front</div>
<div class="t" style="left:305px;top:628px;font-size:11px;color:#000;">Right</div>
<div class="t" style="left:350px;top:628px;font-size:11px;color:#000;">Layout1</div>
<div class="t" style="left:410px;top:628px;font-size:11px;color:#000;">Layout2</div>
<div class="a" style="left:4px;top:642px;width:1272px;height:23px;background:#ece9d8"></div>
<div class="a" style="left:4px;top:643px;width:718px;height:21px;background:linear-gradient(#fbfbf8,#eeede6)"></div>
<div class="a" style="left:721px;top:643px;width:1px;height:21px;background:#c5c2b2"></div>
<div class="a" style="left:4px;top:664px;width:1272px;height:1px;background:#aca899"></div>
<div class="a" style="left:8px;top:647px;width:2px;height:2px;background:#a8a698"></div>
<div class="a" style="left:8px;top:651px;width:2px;height:2px;background:#a8a698"></div>
<div class="a" style="left:8px;top:655px;width:2px;height:2px;background:#a8a698"></div>
<div class="a" style="left:8px;top:659px;width:2px;height:2px;background:#a8a698"></div>
<div class="a" style="left:14px;top:647px;width:13px;height:13px;background:linear-gradient(135deg,#dcdcd7,#fff);border:1px solid #1c5180"></div>
<svg class="a" style="left:14px;top:647px;" width="13" height="13" viewBox="0 0 13 13"><path d="M3 6 L5.5 9 L10 3.5" stroke="#21a121" stroke-width="2" fill="none"/></svg>
<div class="t" style="left:31px;top:648px;font-size:11px;color:#000;">End</div>
<div class="a" style="left:68px;top:647px;width:13px;height:13px;background:linear-gradient(135deg,#dcdcd7,#fff);border:1px solid #1c5180"></div>
<div class="t" style="left:85px;top:648px;font-size:11px;color:#000;">Near</div>
<div class="a" style="left:122px;top:647px;width:13px;height:13px;background:linear-gradient(135deg,#dcdcd7,#fff);border:1px solid #1c5180"></div>
<div class="t" style="left:139px;top:648px;font-size:11px;color:#000;">Point</div>
<div class="a" style="left:176px;top:647px;width:13px;height:13px;background:linear-gradient(135deg,#dcdcd7,#fff);border:1px solid #1c5180"></div>
<div class="t" style="left:193px;top:648px;font-size:11px;color:#000;">Mid</div>
<div class="a" style="left:230px;top:647px;width:13px;height:13px;background:linear-gradient(135deg,#dcdcd7,#fff);border:1px solid #1c5180"></div>
<div class="t" style="left:247px;top:648px;font-size:11px;color:#000;">Cen</div>
<div class="a" style="left:284px;top:647px;width:13px;height:13px;background:linear-gradient(135deg,#dcdcd7,#fff);border:1px solid #1c5180"></div>
<div class="t" style="left:301px;top:648px;font-size:11px;color:#000;">Int</div>
<div class="a" style="left:338px;top:647px;width:13px;height:13px;background:linear-gradient(135deg,#dcdcd7,#fff);border:1px solid #1c5180"></div>
<div class="t" style="left:355px;top:648px;font-size:11px;color:#000;">Perp</div>
<div class="a" style="left:392px;top:647px;width:13px;height:13px;background:linear-gradient(135deg,#dcdcd7,#fff);border:1px solid #1c5180"></div>
<div class="t" style="left:409px;top:648px;font-size:11px;color:#000;">Tan</div>
<div class="a" style="left:446px;top:647px;width:13px;height:13px;background:linear-gradient(135deg,#dcdcd7,#fff);border:1px solid #1c5180"></div>
<div class="t" style="left:463px;top:648px;font-size:11px;color:#000;">Quad</div>
<div class="a" style="left:500px;top:647px;width:13px;height:13px;background:linear-gradient(135deg,#dcdcd7,#fff);border:1px solid #1c5180"></div>
<div class="t" style="left:517px;top:648px;font-size:11px;color:#000;">Knot</div>
<div class="a" style="left:554px;top:647px;width:13px;height:13px;background:linear-gradient(135deg,#dcdcd7,#fff);border:1px solid #1c5180"></div>
<div class="t" style="left:571px;top:648px;font-size:11px;color:#000;">Project</div>
<div class="a" style="left:608px;top:647px;width:13px;height:13px;background:linear-gradient(135deg,#dcdcd7,#fff);border:1px solid #1c5180"></div>
<div class="a" style="left:610px;top:649px;width:9px;height:9px;background:#1a4e8c"></div>
<div class="t" style="left:625px;top:648px;font-size:11px;color:#000;">STrack</div>
<div class="a" style="left:662px;top:647px;width:13px;height:13px;background:linear-gradient(135deg,#dcdcd7,#fff);border:1px solid #1c5180"></div>
<div class="t" style="left:679px;top:648px;font-size:11px;color:#000;">Disable</div>
<div class="a" style="left:4px;top:665px;width:1272px;height:19px;background:#ece9d8"></div>
<div class="a" style="left:4px;top:665px;width:1272px;height:1px;background:#fff"></div>
<div class="a" style="left:57px;top:667px;width:1px;height:16px;background:#d4d0c0"></div>
<div class="a" style="left:585px;top:667px;width:1px;height:16px;background:#d4d0c0"></div>
<div class="a" style="left:632px;top:667px;width:1px;height:16px;background:#d4d0c0"></div>
<div class="a" style="left:685px;top:667px;width:1px;height:16px;background:#d4d0c0"></div>
<div class="a" style="left:726px;top:667px;width:1px;height:16px;background:#d4d0c0"></div>
<div class="a" style="left:777px;top:667px;width:1px;height:16px;background:#d4d0c0"></div>
<div class="a" style="left:885px;top:667px;width:1px;height:16px;background:#d4d0c0"></div>
<div class="a" style="left:727px;top:666px;width:50px;height:17px;background:#f8f7f2"></div>
<div class="t" style="left:14px;top:670px;font-size:11px;color:#000;">CPlane</div>
<div class="t" style="left:64px;top:670px;font-size:11px;color:#000;">x 22.2254</div>
<div class="t" style="left:151px;top:670px;font-size:11px;color:#000;">y 33.6726</div>
<div class="t" style="left:239px;top:670px;font-size:11px;color:#000;">z 0.0000</div>
<div class="a" style="left:417px;top:670px;width:12px;height:12px;background:#000"></div>
<div class="t" style="left:430px;top:670px;font-size:11px;color:#000;">Default</div>
<div class="t" style="left:597px;top:670px;font-size:11px;color:#000;">Snap</div>
<div class="t" style="left:643px;top:670px;font-size:11px;color:#000;">Ortho</div>
<div class="t" style="left:690px;top:670px;font-size:11px;color:#000;">Planar</div>
<div class="t" style="left:735px;top:670px;font-size:11px;font-weight:bold;color:#000;">Osnap</div>
<div class="t" style="left:796px;top:670px;font-size:11px;color:#000;">Record History</div>
<svg class="a" style="left:1262px;top:670px;" width="12" height="12" viewBox="0 0 12 12"><path d="M10 2 L2 10 M10 6 L6 10" stroke="#b8b4a4" stroke-width="1.5" stroke-dasharray="1.5 1.5"/></svg>
<div class="a" style="left:860px;top:126px;width:158px;height:516px;background:#ece9d8"></div>
<div class="a" style="left:860px;top:127px;width:1px;height:514px;background:#fff"></div>
<div class="a" style="left:1017px;top:127px;width:1px;height:514px;background:#aca899"></div>
<div class="t" style="left:870px;top:131px;font-size:11px;color:#000;">Properties</div>
<div class="a" style="left:928px;top:135px;width:1px;height:1px;background:#a09d8f"></div>
<div class="a" style="left:928px;top:138px;width:1px;height:1px;background:#a09d8f"></div>
<div class="a" style="left:931px;top:135px;width:1px;height:1px;background:#a09d8f"></div>
<div class="a" style="left:931px;top:138px;width:1px;height:1px;background:#a09d8f"></div>
<div class="a" style="left:934px;top:135px;width:1px;height:1px;background:#a09d8f"></div>
<div class="a" style="left:934px;top:138px;width:1px;height:1px;background:#a09d8f"></div>
<div class="a" style="left:937px;top:135px;width:1px;height:1px;background:#a09d8f"></div>
<div class="a" style="left:937px;top:138px;width:1px;height:1px;background:#a09d8f"></div>
<div class="a" style="left:940px;top:135px;width:1px;height:1px;background:#a09d8f"></div>
<div class="a" style="left:940px;top:138px;width:1px;height:1px;background:#a09d8f"></div>
<div class="a" style="left:943px;top:135px;width:1px;height:1px;background:#a09d8f"></div>
<div class="a" style="left:943px;top:138px;width:1px;height:1px;background:#a09d8f"></div>
<div class="a" style="left:946px;top:135px;width:1px;height:1px;background:#a09d8f"></div>
<div class="a" style="left:946px;top:138px;width:1px;height:1px;background:#a09d8f"></div>
<div class="a" style="left:949px;top:135px;width:1px;height:1px;background:#a09d8f"></div>
<div class="a" style="left:949px;top:138px;width:1px;height:1px;background:#a09d8f"></div>
<div class="a" style="left:952px;top:135px;width:1px;height:1px;background:#a09d8f"></div>
<div class="a" style="left:952px;top:138px;width:1px;height:1px;background:#a09d8f"></div>
<div class="a" style="left:955px;top:135px;width:1px;height:1px;background:#a09d8f"></div>
<div class="a" style="left:955px;top:138px;width:1px;height:1px;background:#a09d8f"></div>
<div class="a" style="left:958px;top:135px;width:1px;height:1px;background:#a09d8f"></div>
<div class="a" style="left:958px;top:138px;width:1px;height:1px;background:#a09d8f"></div>
<div class="a" style="left:961px;top:135px;width:1px;height:1px;background:#a09d8f"></div>
<div class="a" style="left:961px;top:138px;width:1px;height:1px;background:#a09d8f"></div>
<div class="a" style="left:964px;top:135px;width:1px;height:1px;background:#a09d8f"></div>
<div class="a" style="left:964px;top:138px;width:1px;height:1px;background:#a09d8f"></div>
<div class="a" style="left:967px;top:135px;width:1px;height:1px;background:#a09d8f"></div>
<div class="a" style="left:967px;top:138px;width:1px;height:1px;background:#a09d8f"></div>
<div class="a" style="left:970px;top:135px;width:1px;height:1px;background:#a09d8f"></div>
<div class="a" style="left:970px;top:138px;width:1px;height:1px;background:#a09d8f"></div>
<div class="a" style="left:973px;top:135px;width:1px;height:1px;background:#a09d8f"></div>
<div class="a" style="left:973px;top:138px;width:1px;height:1px;background:#a09d8f"></div>
<div class="a" style="left:976px;top:135px;width:1px;height:1px;background:#a09d8f"></div>
<div class="a" style="left:976px;top:138px;width:1px;height:1px;background:#a09d8f"></div>
<div class="a" style="left:979px;top:135px;width:1px;height:1px;background:#a09d8f"></div>
<div class="a" style="left:979px;top:138px;width:1px;height:1px;background:#a09d8f"></div>
<div class="a" style="left:982px;top:135px;width:1px;height:1px;background:#a09d8f"></div>
<div class="a" style="left:982px;top:138px;width:1px;height:1px;background:#a09d8f"></div>
<div class="a" style="left:985px;top:135px;width:1px;height:1px;background:#a09d8f"></div>
<div class="a" style="left:985px;top:138px;width:1px;height:1px;background:#a09d8f"></div>
<div class="a" style="left:988px;top:135px;width:1px;height:1px;background:#a09d8f"></div>
<div class="a" style="left:988px;top:138px;width:1px;height:1px;background:#a09d8f"></div>
<div class="a" style="left:991px;top:135px;width:1px;height:1px;background:#a09d8f"></div>
<div class="a" style="left:991px;top:138px;width:1px;height:1px;background:#a09d8f"></div>
<div class="a" style="left:994px;top:135px;width:1px;height:1px;background:#a09d8f"></div>
<div class="a" style="left:994px;top:138px;width:1px;height:1px;background:#a09d8f"></div>
<div class="a" style="left:997px;top:135px;width:1px;height:1px;background:#a09d8f"></div>
<div class="a" style="left:997px;top:138px;width:1px;height:1px;background:#a09d8f"></div>
<div class="a" style="left:1004px;top:131px;width:11px;height:11px;background:linear-gradient(135deg,#f4906c,#d64820);border:1px solid #b83c18"></div>
<svg class="a" style="left:1004px;top:131px;" width="11" height="11" viewBox="0 0 11 11"><path d="M2.5 2.5 L8.5 8.5 M8.5 2.5 L2.5 8.5" stroke="#fff" stroke-width="1.8"/></svg>
<div class="a" style="left:866px;top:146px;width:151px;height:494px;background:#ece9d8;border-left:1px solid #fdfdfb"></div>
<div class="t" style="left:872px;top:150px;font-size:11px;color:#2250a8;">Viewport</div>
<div class="a" style="left:918px;top:158px;width:96px;height:1px;background:#aca899"></div>
<div class="t" style="left:875px;top:251px;font-size:11px;color:#2250a8;">Camera</div>
<div class="t" style="left:875px;top:368px;font-size:11px;color:#2250a8;">Target</div>
<div class="t" style="left:875px;top:467px;font-size:11px;color:#2250a8;">Wallpaper</div>
<div class="a" style="left:880px;top:170px;width:62px;height:18px;background:#fff"></div>
<div class="a" style="left:943px;top:170px;width:69px;height:18px;background:#fff"></div>
<div class="t" style="left:884px;top:173px;font-size:11px;color:#000;">Title</div>
<div class="t" style="left:947px;top:173px;font-size:11px;color:#000;">Top</div>
<div class="a" style="left:880px;top:189px;width:62px;height:18px;background:#fff"></div>
<div class="a" style="left:943px;top:189px;width:69px;height:18px;background:#ece9d8"></div>
<div class="t" style="left:884px;top:192px;font-size:11px;color:#a8a8a8;">Width</div>
<div class="t" style="left:947px;top:192px;font-size:11px;color:#a8a8a8;">798</div>
<div class="a" style="left:880px;top:208px;width:62px;height:18px;background:#fff"></div>
<div class="a" style="left:943px;top:208px;width:69px;height:18px;background:#ece9d8"></div>
<div class="t" style="left:884px;top:211px;font-size:11px;color:#a8a8a8;">Height</div>
<div class="t" style="left:947px;top:211px;font-size:11px;color:#a8a8a8;">499</div>
<div class="a" style="left:880px;top:227px;width:62px;height:18px;background:#fff"></div>
<div class="a" style="left:943px;top:227px;width:69px;height:18px;background:#fff"></div>
<div class="t" style="left:884px;top:230px;font-size:11px;color:#000;">Projection</div>
<div class="t" style="left:947px;top:230px;font-size:11px;color:#000;">Parallel</div>
<div class="a" style="left:880px;top:268px;width:62px;height:18px;background:#fff"></div>
<div class="a" style="left:943px;top:268px;width:69px;height:18px;background:#ece9d8"></div>
<div class="t" style="left:884px;top:271px;font-size:11px;color:#a8a8a8;">Lens Len...</div>
<div class="t" style="left:947px;top:271px;font-size:11px;color:#a8a8a8;">50.0</div>
<div class="a" style="left:880px;top:287px;width:62px;height:18px;background:#fff"></div>
<div class="a" style="left:943px;top:287px;width:69px;height:18px;background:#fff"></div>
<div class="t" style="left:884px;top:290px;font-size:11px;color:#000;">X Location</div>
<div class="t" style="left:947px;top:290px;font-size:11px;color:#000;">40.323</div>
<div class="a" style="left:880px;top:306px;width:62px;height:18px;background:#fff"></div>
<div class="a" style="left:943px;top:306px;width:69px;height:18px;background:#fff"></div>
<div class="t" style="left:884px;top:309px;font-size:11px;color:#000;">Y Location</div>
<div class="t" style="left:947px;top:309px;font-size:11px;color:#000;">15.641</div>
<div class="a" style="left:880px;top:325px;width:62px;height:18px;background:#fff"></div>
<div class="a" style="left:943px;top:325px;width:69px;height:18px;background:#fff"></div>
<div class="t" style="left:884px;top:328px;font-size:11px;color:#000;">Z Location</div>
<div class="t" style="left:947px;top:328px;font-size:11px;color:#000;">82.772</div>
<div class="a" style="left:880px;top:344px;width:62px;height:18px;background:#fff"></div>
<div class="a" style="left:943px;top:344px;width:69px;height:18px;background:#fff"></div>
<div class="t" style="left:884px;top:347px;font-size:11px;color:#000;">Location</div>
<div class="a" style="left:880px;top:386px;width:62px;height:18px;background:#fff"></div>
<div class="a" style="left:943px;top:386px;width:69px;height:18px;background:#fff"></div>
<div class="t" style="left:884px;top:389px;font-size:11px;color:#000;">X Target</div>
<div class="t" style="left:947px;top:389px;font-size:11px;color:#000;">40.323</div>
<div class="a" style="left:880px;top:405px;width:62px;height:18px;background:#fff"></div>
<div class="a" style="left:943px;top:405px;width:69px;height:18px;background:#fff"></div>
<div class="t" style="left:884px;top:408px;font-size:11px;color:#000;">Y Target</div>
<div class="t" style="left:947px;top:408px;font-size:11px;color:#000;">16.481</div>
<div class="a" style="left:880px;top:424px;width:62px;height:18px;background:#fff"></div>
<div class="a" style="left:943px;top:424px;width:69px;height:18px;background:#fff"></div>
<div class="t" style="left:884px;top:427px;font-size:11px;color:#000;">Z Target</div>
<div class="t" style="left:947px;top:427px;font-size:11px;color:#000;">2.565</div>
<div class="a" style="left:880px;top:443px;width:62px;height:18px;background:#fff"></div>
<div class="a" style="left:943px;top:443px;width:69px;height:18px;background:#fff"></div>
<div class="t" style="left:884px;top:446px;font-size:11px;color:#000;">Location</div>
<div class="a" style="left:880px;top:485px;width:62px;height:18px;background:#fff"></div>
<div class="a" style="left:943px;top:485px;width:69px;height:18px;background:#fff"></div>
<div class="t" style="left:884px;top:488px;font-size:11px;color:#000;">Filename</div>
<div class="t" style="left:947px;top:488px;font-size:11px;color:#000;">(none)</div>
<div class="a" style="left:880px;top:504px;width:62px;height:18px;background:#fff"></div>
<div class="a" style="left:943px;top:504px;width:69px;height:18px;background:#fff"></div>
<div class="t" style="left:884px;top:507px;font-size:11px;color:#000;">Show</div>
<div class="a" style="left:880px;top:523px;width:62px;height:18px;background:#fff"></div>
<div class="a" style="left:943px;top:523px;width:69px;height:18px;background:#fff"></div>
<div class="t" style="left:884px;top:526px;font-size:11px;color:#000;">Gray</div>
<div class="a" style="left:995px;top:227px;width:17px;height:18px;background:linear-gradient(#c6d6f8,#a8c0f0);border:1px solid #fff"></div>
<svg class="a" style="left:995px;top:227px;" width="17" height="18" viewBox="0 0 17 18"><path d="M4.5 7 L8.5 11 L12.5 7" stroke="#3a5288" stroke-width="2" fill="none"/></svg>
<div class="a" style="left:944px;top:344px;width:68px;height:18px;background:linear-gradient(#fdfdfd,#ecebe6 80%,#d6d0c5);border:1px solid #003c74;border-radius:3px"></div>
<div class="t" style="left:961px;top:347px;font-size:11px;color:#000;">Place...</div>
<div class="a" style="left:944px;top:443px;width:68px;height:18px;background:linear-gradient(#fdfdfd,#ecebe6 80%,#d6d0c5);border:1px solid #003c74;border-radius:3px"></div>
<div class="t" style="left:961px;top:446px;font-size:11px;color:#000;">Place...</div>
<div class="a" style="left:993px;top:486px;width:19px;height:17px;background:linear-gradient(#fdfdfd,#ecebe6 80%,#d6d0c5);border:1px solid #003c74;border-radius:3px"></div>
<div class="t" style="left:998px;top:487px;font-size:11px;color:#000;">...</div>
<div class="a" style="left:947px;top:506px;width:13px;height:13px;background:linear-gradient(135deg,#dcdcd7,#fff);border:1px solid #1c5180"></div>
<svg class="a" style="left:947px;top:506px;" width="13" height="13" viewBox="0 0 13 13"><path d="M3 6 L5.5 9 L10 3.5" stroke="#21a121" stroke-width="2" fill="none"/></svg>
<div class="a" style="left:947px;top:525px;width:13px;height:13px;background:linear-gradient(135deg,#dcdcd7,#fff);border:1px solid #1c5180"></div>
<svg class="a" style="left:947px;top:525px;" width="13" height="13" viewBox="0 0 13 13"><path d="M3 6 L5.5 9 L10 3.5" stroke="#21a121" stroke-width="2" fill="none"/></svg>
<div class="a" style="left:1018px;top:126px;width:258px;height:516px;background:#ece9d8"></div>
<div class="a" style="left:1018px;top:127px;width:1px;height:514px;background:#fff"></div>
<div class="t" style="left:1027px;top:131px;font-size:11px;color:#000;">Command Help</div>
<div class="a" style="left:1106px;top:135px;width:1px;height:1px;background:#a09d8f"></div>
<div class="a" style="left:1106px;top:138px;width:1px;height:1px;background:#a09d8f"></div>
<div class="a" style="left:1109px;top:135px;width:1px;height:1px;background:#a09d8f"></div>
<div class="a" style="left:1109px;top:138px;width:1px;height:1px;background:#a09d8f"></div>
<div class="a" style="left:1112px;top:135px;width:1px;height:1px;background:#a09d8f"></div>
<div class="a" style="left:1112px;top:138px;width:1px;height:1px;background:#a09d8f"></div>
<div class="a" style="left:1115px;top:135px;width:1px;height:1px;background:#a09d8f"></div>
<div class="a" style="left:1115px;top:138px;width:1px;height:1px;background:#a09d8f"></div>
<div class="a" style="left:1118px;top:135px;width:1px;height:1px;background:#a09d8f"></div>
<div class="a" style="left:1118px;top:138px;width:1px;height:1px;background:#a09d8f"></div>
<div class="a" style="left:1121px;top:135px;width:1px;height:1px;background:#a09d8f"></div>
<div class="a" style="left:1121px;top:138px;width:1px;height:1px;background:#a09d8f"></div>
<div class="a" style="left:1124px;top:135px;width:1px;height:1px;background:#a09d8f"></div>
<div class="a" style="left:1124px;top:138px;width:1px;height:1px;background:#a09d8f"></div>
<div class="a" style="left:1127px;top:135px;width:1px;height:1px;background:#a09d8f"></div>
<div class="a" style="left:1127px;top:138px;width:1px;height:1px;background:#a09d8f"></div>
<div class="a" style="left:1130px;top:135px;width:1px;height:1px;background:#a09d8f"></div>
<div class="a" style="left:1130px;top:138px;width:1px;height:1px;background:#a09d8f"></div>
<div class="a" style="left:1133px;top:135px;width:1px;height:1px;background:#a09d8f"></div>
<div class="a" style="left:1133px;top:138px;width:1px;height:1px;background:#a09d8f"></div>
<div class="a" style="left:1136px;top:135px;width:1px;height:1px;background:#a09d8f"></div>
<div class="a" style="left:1136px;top:138px;width:1px;height:1px;background:#a09d8f"></div>
<div class="a" style="left:1139px;top:135px;width:1px;height:1px;background:#a09d8f"></div>
<div class="a" style="left:1139px;top:138px;width:1px;height:1px;background:#a09d8f"></div>
<div class="a" style="left:1142px;top:135px;width:1px;height:1px;background:#a09d8f"></div>
<div class="a" style="left:1142px;top:138px;width:1px;height:1px;background:#a09d8f"></div>
<div class="a" style="left:1145px;top:135px;width:1px;height:1px;background:#a09d8f"></div>
<div class="a" style="left:1145px;top:138px;width:1px;height:1px;background:#a09d8f"></div>
<div class="a" style="left:1148px;top:135px;width:1px;height:1px;background:#a09d8f"></div>
<div class="a" style="left:1148px;top:138px;width:1px;height:1px;background:#a09d8f"></div>
<div class="a" style="left:1151px;top:135px;width:1px;height:1px;background:#a09d8f"></div>
<div class="a" style="left:1151px;top:138px;width:1px;height:1px;background:#a09d8f"></div>
<div class="a" style="left:1154px;top:135px;width:1px;height:1px;background:#a09d8f"></div>
<div class="a" style="left:1154px;top:138px;width:1px;height:1px;background:#a09d8f"></div>
<div class="a" style="left:1157px;top:135px;width:1px;height:1px;background:#a09d8f"></div>
<div class="a" style="left:1157px;top:138px;width:1px;height:1px;background:#a09d8f"></div>
<div class="a" style="left:1160px;top:135px;width:1px;height:1px;background:#a09d8f"></div>
<div class="a" style="left:1160px;top:138px;width:1px;height:1px;background:#a09d8f"></div>
<div class="a" style="left:1163px;top:135px;width:1px;height:1px;background:#a09d8f"></div>
<div class="a" style="left:1163px;top:138px;width:1px;height:1px;background:#a09d8f"></div>
<div class="a" style="left:1166px;top:135px;width:1px;height:1px;background:#a09d8f"></div>
<div class="a" style="left:1166px;top:138px;width:1px;height:1px;background:#a09d8f"></div>
<div class="a" style="left:1169px;top:135px;width:1px;height:1px;background:#a09d8f"></div>
<div class="a" style="left:1169px;top:138px;width:1px;height:1px;background:#a09d8f"></div>
<div class="a" style="left:1172px;top:135px;width:1px;height:1px;background:#a09d8f"></div>
<div class="a" style="left:1172px;top:138px;width:1px;height:1px;background:#a09d8f"></div>
<div class="a" style="left:1175px;top:135px;width:1px;height:1px;background:#a09d8f"></div>
<div class="a" style="left:1175px;top:138px;width:1px;height:1px;background:#a09d8f"></div>
<div class="a" style="left:1178px;top:135px;width:1px;height:1px;background:#a09d8f"></div>
<div class="a" style="left:1178px;top:138px;width:1px;height:1px;background:#a09d8f"></div>
<div class="a" style="left:1181px;top:135px;width:1px;height:1px;background:#a09d8f"></div>
<div class="a" style="left:1181px;top:138px;width:1px;height:1px;background:#a09d8f"></div>
<div class="a" style="left:1184px;top:135px;width:1px;height:1px;background:#a09d8f"></div>
<div class="a" style="left:1184px;top:138px;width:1px;height:1px;background:#a09d8f"></div>
<div class="a" style="left:1187px;top:135px;width:1px;height:1px;background:#a09d8f"></div>
<div class="a" style="left:1187px;top:138px;width:1px;height:1px;background:#a09d8f"></div>
<div class="a" style="left:1190px;top:135px;width:1px;height:1px;background:#a09d8f"></div>
<div class="a" style="left:1190px;top:138px;width:1px;height:1px;background:#a09d8f"></div>
<div class="a" style="left:1193px;top:135px;width:1px;height:1px;background:#a09d8f"></div>
<div class="a" style="left:1193px;top:138px;width:1px;height:1px;background:#a09d8f"></div>
<div class="a" style="left:1196px;top:135px;width:1px;height:1px;background:#a09d8f"></div>
<div class="a" style="left:1196px;top:138px;width:1px;height:1px;background:#a09d8f"></div>
<div class="a" style="left:1199px;top:135px;width:1px;height:1px;background:#a09d8f"></div>
<div class="a" style="left:1199px;top:138px;width:1px;height:1px;background:#a09d8f"></div>
<div class="a" style="left:1202px;top:135px;width:1px;height:1px;background:#a09d8f"></div>
<div class="a" style="left:1202px;top:138px;width:1px;height:1px;background:#a09d8f"></div>
<div class="a" style="left:1205px;top:135px;width:1px;height:1px;background:#a09d8f"></div>
<div class="a" style="left:1205px;top:138px;width:1px;height:1px;background:#a09d8f"></div>
<div class="a" style="left:1208px;top:135px;width:1px;height:1px;background:#a09d8f"></div>
<div class="a" style="left:1208px;top:138px;width:1px;height:1px;background:#a09d8f"></div>
<div class="a" style="left:1211px;top:135px;width:1px;height:1px;background:#a09d8f"></div>
<div class="a" style="left:1211px;top:138px;width:1px;height:1px;background:#a09d8f"></div>
<div class="a" style="left:1214px;top:135px;width:1px;height:1px;background:#a09d8f"></div>
<div class="a" style="left:1214px;top:138px;width:1px;height:1px;background:#a09d8f"></div>
<div class="a" style="left:1217px;top:135px;width:1px;height:1px;background:#a09d8f"></div>
<div class="a" style="left:1217px;top:138px;width:1px;height:1px;background:#a09d8f"></div>
<div class="a" style="left:1220px;top:135px;width:1px;height:1px;background:#a09d8f"></div>
<div class="a" style="left:1220px;top:138px;width:1px;height:1px;background:#a09d8f"></div>
<div class="a" style="left:1223px;top:135px;width:1px;height:1px;background:#a09d8f"></div>
<div class="a" style="left:1223px;top:138px;width:1px;height:1px;background:#a09d8f"></div>
<div class="a" style="left:1226px;top:135px;width:1px;height:1px;background:#a09d8f"></div>
<div class="a" style="left:1226px;top:138px;width:1px;height:1px;background:#a09d8f"></div>
<div class="a" style="left:1229px;top:135px;width:1px;height:1px;background:#a09d8f"></div>
<div class="a" style="left:1229px;top:138px;width:1px;height:1px;background:#a09d8f"></div>
<div class="a" style="left:1232px;top:135px;width:1px;height:1px;background:#a09d8f"></div>
<div class="a" style="left:1232px;top:138px;width:1px;height:1px;background:#a09d8f"></div>
<div class="a" style="left:1235px;top:135px;width:1px;height:1px;background:#a09d8f"></div>
<div class="a" style="left:1235px;top:138px;width:1px;height:1px;background:#a09d8f"></div>
<div class="a" style="left:1238px;top:135px;width:1px;height:1px;background:#a09d8f"></div>
<div class="a" style="left:1238px;top:138px;width:1px;height:1px;background:#a09d8f"></div>
<div class="a" style="left:1241px;top:135px;width:1px;height:1px;background:#a09d8f"></div>
<div class="a" style="left:1241px;top:138px;width:1px;height:1px;background:#a09d8f"></div>
<div class="a" style="left:1244px;top:135px;width:1px;height:1px;background:#a09d8f"></div>
<div class="a" style="left:1244px;top:138px;width:1px;height:1px;background:#a09d8f"></div>
<div class="a" style="left:1247px;top:135px;width:1px;height:1px;background:#a09d8f"></div>
<div class="a" style="left:1247px;top:138px;width:1px;height:1px;background:#a09d8f"></div>
<div class="a" style="left:1250px;top:135px;width:1px;height:1px;background:#a09d8f"></div>
<div class="a" style="left:1250px;top:138px;width:1px;height:1px;background:#a09d8f"></div>
<div class="a" style="left:1253px;top:135px;width:1px;height:1px;background:#a09d8f"></div>
<div class="a" style="left:1253px;top:138px;width:1px;height:1px;background:#a09d8f"></div>
<div class="a" style="left:1262px;top:131px;width:11px;height:11px;background:linear-gradient(135deg,#f4906c,#d64820);border:1px solid #b83c18"></div>
<svg class="a" style="left:1262px;top:131px;" width="11" height="11" viewBox="0 0 11 11"><path d="M2.5 2.5 L8.5 8.5 M8.5 2.5 L2.5 8.5" stroke="#fff" stroke-width="1.8"/></svg>
<div class="a" style="left:1025px;top:145px;width:248px;height:23px;background:#fff;border:1px solid #7f9db9"></div>
<div class="a" style="left:1028px;top:170px;width:13px;height:13px;background:linear-gradient(135deg,#dcdcd7,#fff);border:1px solid #1c5180"></div>
<svg class="a" style="left:1028px;top:170px;" width="13" height="13" viewBox="0 0 13 13"><path d="M3 6 L5.5 9 L10 3.5" stroke="#21a121" stroke-width="2" fill="none"/></svg>
<div class="t" style="left:1043px;top:170px;font-size:11px;color:#000;">Auto-Update</div>
<div class="a" style="left:1025px;top:192px;width:233px;height:446px;background:#fff;border-left:2px solid #8c8a80;border-top:2px solid #8c8a80"></div>
<div class="a" style="left:1257px;top:193px;width:15px;height:430px;background:#f4f3ee"></div>
<div class="a" style="left:1257px;top:194px;width:15px;height:15px;background:linear-gradient(#d6e2fb,#bcd0f5);border:1px solid #fff;border-radius:2px;box-shadow:0 0 0 0.5px #b8c8e8"></div>
<svg class="a" style="left:1257px;top:194px" width="15" height="15" viewBox="0 0 15 15"><path d="M3.5 9 L7.5 5 L11.5 9" stroke="#4d6185" stroke-width="2" fill="none"/></svg>
<div class="a" style="left:1257px;top:210px;width:15px;height:12px;background:linear-gradient(#d6e2fb,#bcd0f5);border:1px solid #fff;border-radius:2px;box-shadow:0 0 0 0.5px #b8c8e8"></div>
<svg class="a" style="left:1257px;top:210px" width="15" height="12" viewBox="0 0 15 12"><path d="M4 3.5 H11 M4 5.5 H11 M4 7.5 H11" stroke="#8ca0d0" stroke-width="1"/></svg>
<div class="a" style="left:1257px;top:606px;width:15px;height:15px;background:linear-gradient(#d6e2fb,#bcd0f5);border:1px solid #fff;border-radius:2px;box-shadow:0 0 0 0.5px #b8c8e8"></div>
<svg class="a" style="left:1257px;top:606px" width="15" height="15" viewBox="0 0 15 15"><path d="M3.5 5 L7.5 9 L11.5 5" stroke="#4d6185" stroke-width="2" fill="none"/></svg>
<div class="a" style="left:1026px;top:623px;width:231px;height:15px;background:#f4f3ee"></div>
<div class="a" style="left:1026px;top:623px;width:16px;height:15px;background:linear-gradient(#d6e2fb,#bcd0f5);border:1px solid #fff;border-radius:2px;box-shadow:0 0 0 0.5px #b8c8e8"></div>
<svg class="a" style="left:1026px;top:623px" width="16" height="15" viewBox="0 0 16 15"><path d="M10 3.5 L6 7.5 L10 11.5" stroke="#4d6185" stroke-width="2" fill="none"/></svg>
<div class="a" style="left:1045px;top:623px;width:172px;height:15px;background:linear-gradient(#d6e2fb,#bcd0f5);border:1px solid #fff;border-radius:2px;box-shadow:0 0 0 0.5px #b8c8e8"></div>
<svg class="a" style="left:1045px;top:623px" width="172" height="15" viewBox="0 0 172 15"><path d="M83.5 4 V11 M85.5 4 V11 M87.5 4 V11 M89.5 4 V11" stroke="#8ca0d0" stroke-width="1"/></svg>
<div class="a" style="left:1240px;top:623px;width:15px;height:15px;background:linear-gradient(#d6e2fb,#bcd0f5);border:1px solid #fff;border-radius:2px;box-shadow:0 0 0 0.5px #b8c8e8"></div>
<svg class="a" style="left:1240px;top:623px" width="15" height="15" viewBox="0 0 15 15"><path d="M6 3.5 L10 7.5 L6 11.5" stroke="#4d6185" stroke-width="2" fill="none"/></svg>
<div class="t" style="left:1037px;top:200px;font-size:17px;color:#000;letter-spacing:0.8px;line-height:16px">Pan</div>
<div class="t" style="left:1037px;top:225px;font-size:13px;color:#000;letter-spacing:1.05px;line-height:16px">Shifts the location of the view</div>
<div class="t" style="left:1037px;top:241px;font-size:13px;color:#000;letter-spacing:1.05px;line-height:16px">camera and target parallel to</div>
<div class="t" style="left:1037px;top:257px;font-size:13px;color:#000;letter-spacing:1.05px;line-height:16px">the view plane.</div>
<div class="t" style="left:1037px;top:289px;font-size:13px;font-weight:bold;color:#000;letter-spacing:0.9px;line-height:16px">Options</div>
<div class="a" style="left:1037px;top:305px;width:208px;height:1px;background:#c8c8c8"></div>
<div class="t" style="left:1037px;top:317px;font-size:13px;font-weight:bold;color:#000;letter-spacing:0.8px;line-height:16px">Down</div>
<div class="t" style="left:1037px;top:337px;font-size:13px;color:#000;letter-spacing:1.05px;line-height:16px">Pan the active view down</div>
<div class="t" style="left:1037px;top:364px;font-size:13px;font-weight:bold;color:#000;letter-spacing:0.8px;line-height:16px">Left</div>
<div class="t" style="left:1037px;top:384px;font-size:13px;color:#000;letter-spacing:1.05px;line-height:16px">Pan the active view left</div>
<div class="t" style="left:1037px;top:411px;font-size:13px;font-weight:bold;color:#000;letter-spacing:0.8px;line-height:16px">Right</div>
<div class="t" style="left:1037px;top:431px;font-size:13px;color:#000;letter-spacing:1.05px;line-height:16px">Pan the active view right</div>
<div class="t" style="left:1037px;top:458px;font-size:13px;font-weight:bold;color:#000;letter-spacing:0.8px;line-height:16px">Up</div>
<div class="t" style="left:1037px;top:478px;font-size:13px;color:#000;letter-spacing:1.05px;line-height:16px">Pan the active view up</div>
<div class="t" style="left:1037px;top:505px;font-size:13px;font-weight:bold;color:#000;letter-spacing:0.8px;line-height:16px">In</div>
<div class="t" style="left:1037px;top:525px;font-size:13px;color:#000;letter-spacing:1.05px;line-height:16px">Pan the active view in</div>
<div class="t" style="left:1037px;top:552px;font-size:13px;font-weight:bold;color:#000;letter-spacing:0.8px;line-height:16px">Out</div>
<div class="t" style="left:1037px;top:572px;font-size:13px;color:#000;letter-spacing:1.05px;line-height:16px">Pan the active view out</div>
<div class="a" style="left:1037px;top:599px;width:208px;height:24px;background:#fff;border:1px solid #a8a8a8;border-right:2px solid #404040;border-bottom:none"></div>
<div class="a" style="left:1049px;top:608px;width:28px;height:15px;background:#c0c0c0;border:1px solid #fff;border-right:1px solid #404040"></div>
<svg class="a" style="left:1053px;top:606px;clip-path:inset(0 0 1px 0)" width="20" height="17" viewBox="0 0 20 17"><g transform="scale(0.8)" fill="#fff" stroke="#000" stroke-width="1.4"><rect x="7.5" y="5" width="2.6" height="10" rx="1.3"/><rect x="10.1" y="3" width="2.6" height="11" rx="1.3"/><rect x="12.7" y="3.5" width="2.6" height="11" rx="1.3"/><rect x="15.3" y="5.5" width="2.6" height="10" rx="1.3"/><path d="M7.5 12 H17.9 V15.5 C17.9 19 16 21.5 13 21.5 H11.5 C9.5 21.5 8.5 20 7.5 18.5 L4.5 14 C3.8 12.8 5.2 11.8 6.2 12.6 L7.5 14 Z"/></g><rect x="0" y="16" width="20" height="2" fill="#fff" stroke="none"/></svg>
<div class="a" style="left:1018px;top:640px;width:258px;height:1px;background:#ece9d8"></div>
<div class="a" style="left:860px;top:641px;width:416px;height:1px;background:#fbfaf6"></div>
<div class="a" style="left:0px;top:688px;width:1280px;height:32px;background:linear-gradient(#3a78e8 0%,#5a9af0 6%,#2a62dc 18%,#245ad8 50%,#2158d6 85%,#1a48b8 100%)"></div>
<div class="a" style="left:0;top:688px;width:114px;height:32px;border-radius:0 10px 10px 0;background:linear-gradient(#3f9a3f 0%,#72c072 8%,#45a045 25%,#389838 70%,#2f8a2f 100%);box-shadow:inset -2px 0 3px #1a5a1a"></div>
<svg class="a" style="left:12px;top:694px;" width="22" height="22" viewBox="0 0 22 22"><path d="M2 4 C5 2 8 3 10 4 L9 10 C7 9 4 9 1 10 Z" fill="#f04a10"/><path d="M11 4.5 C14 6 17 5 20 4 L19 10 C16 11 13 11 10 10 Z" fill="#5ac020"/><path d="M1 11 C4 10 7 10 9 11 L8 17 C6 16 3 16 0 17 Z" fill="#2a70f0"/><path d="M10 11 C13 12 16 12 19 11 L18 17 C15 18 12 18 9 17 Z" fill="#f8c010"/></svg>
<div class="t" style="left:35px;top:695px;font-size:17.5px;color:#fff;font-style:italic;text-shadow:0.5px 0 0 #fff,1px 1px 1px #1a4a1a;line-height:22px;letter-spacing:-0.2px">έναρξη</div>
<div class="a" style="left:125px;top:692px;width:2px;height:2px;background:#1a3a90"></div>
<div class="a" style="left:126px;top:693px;width:1px;height:1px;background:#6a9af0"></div>
<div class="a" style="left:125px;top:696px;width:2px;height:2px;background:#1a3a90"></div>
<div class="a" style="left:126px;top:697px;width:1px;height:1px;background:#6a9af0"></div>
<div class="a" style="left:125px;top:700px;width:2px;height:2px;background:#1a3a90"></div>
<div class="a" style="left:126px;top:701px;width:1px;height:1px;background:#6a9af0"></div>
<div class="a" style="left:125px;top:704px;width:2px;height:2px;background:#1a3a90"></div>
<div class="a" style="left:126px;top:705px;width:1px;height:1px;background:#6a9af0"></div>
<div class="a" style="left:125px;top:708px;width:2px;height:2px;background:#1a3a90"></div>
<div class="a" style="left:126px;top:709px;width:1px;height:1px;background:#6a9af0"></div>
<div class="a" style="left:125px;top:712px;width:2px;height:2px;background:#1a3a90"></div>
<div class="a" style="left:126px;top:713px;width:1px;height:1px;background:#6a9af0"></div>
<div class="a" style="left:125px;top:716px;width:2px;height:2px;background:#1a3a90"></div>
<div class="a" style="left:126px;top:717px;width:1px;height:1px;background:#6a9af0"></div>
<div class="a" style="left:134px;top:693px;width:157px;height:24px;background:linear-gradient(#4a90f8,#3a7cf0 15%,#3a7aee 80%,#2a60d0);border-radius:3px;border:1px solid #2a5ac8"></div>
<svg class="a" style="left:144px;top:697px;" width="16" height="16" viewBox="0 0 16 16"><circle cx="8" cy="8" r="7.5" fill="#3a5ab0"/><path d="M8 0.5 C12.5 0.5 15.5 4 15.5 8 C15.5 12.5 12 15.5 8 15.5 C4 15.5 0.5 12.5 0.5 8 C0.5 6 1.5 4 3 3 C3 5 4 6 5 6 C5 4 7 3 8 3 C6 4 6 6 7 7 C9 7 11 8 10 10 C9 12 6 12 4 10 C5 13 9 14 12 12 C14 10 14 6 12 4 C11 2 10 1 8 0.5 Z" fill="#f07a10"/></svg>
<div class="t" style="left:162px;top:699px;font-size:11px;color:#fff;letter-spacing:0.1px">Η Πύλη των Ελλήνων...</div>
<div class="a" style="left:295px;top:693px;width:157px;height:24px;background:linear-gradient(#4a90f8,#3a7cf0 15%,#3a7aee 80%,#2a60d0);border-radius:3px;border:1px solid #2a5ac8"></div>
<svg class="a" style="left:305px;top:697px;" width="16" height="16" viewBox="0 0 16 16"><circle cx="8" cy="8" r="7.5" fill="#3a5ab0"/><path d="M8 0.5 C12.5 0.5 15.5 4 15.5 8 C15.5 12.5 12 15.5 8 15.5 C4 15.5 0.5 12.5 0.5 8 C0.5 6 1.5 4 3 3 C3 5 4 6 5 6 C5 4 7 3 8 3 C6 4 6 6 7 7 C9 7 11 8 10 10 C9 12 6 12 4 10 C5 13 9 14 12 12 C14 10 14 6 12 4 C11 2 10 1 8 0.5 Z" fill="#f07a10"/></svg>
<div class="t" style="left:323px;top:699px;font-size:11px;color:#fff;letter-spacing:0.1px">1 of 1 uploaded - You...</div>
<div class="a" style="left:455px;top:693px;width:158px;height:24px;background:linear-gradient(#1e4cb8,#1a44a8);border-radius:3px;border:1px solid #1a3a90"></div>
<div class="t" style="left:485px;top:699px;font-size:11px;color:#fff;letter-spacing:0.1px">5 - Rhinoceros (Corp...</div>
<svg class="a" style="left:466px;top:697px;" width="16" height="16" viewBox="0 0 16 16"><rect width="16" height="16" fill="#111"/><path d="M2 4 L6 3 L9 6 L13 3 L14 5 L11 9 L12 13 L9 12 L7 9 L3 8 Z" fill="#d8d8d8"/></svg>
<div class="a" style="left:1172px;top:688px;width:108px;height:32px;background:linear-gradient(#1a8af0,#18a0f8 10%,#1090e8 50%,#0c80d8 90%,#0a68c0);border-left:1px solid #0a50a0"></div>
<div class="a" style="left:1087px;top:692px;width:2px;height:2px;background:#1a3a90"></div>
<div class="a" style="left:1087px;top:696px;width:2px;height:2px;background:#1a3a90"></div>
<div class="a" style="left:1087px;top:700px;width:2px;height:2px;background:#1a3a90"></div>
<div class="a" style="left:1087px;top:704px;width:2px;height:2px;background:#1a3a90"></div>
<div class="a" style="left:1087px;top:708px;width:2px;height:2px;background:#1a3a90"></div>
<div class="a" style="left:1087px;top:712px;width:2px;height:2px;background:#1a3a90"></div>
<div class="a" style="left:1087px;top:716px;width:2px;height:2px;background:#1a3a90"></div>
<div class="t" style="left:1099px;top:699px;font-size:11.5px;color:#fff;">EN</div>
<svg class="a" style="left:1120px;top:697px;" width="16" height="16" viewBox="0 0 16 16"><rect x="1" y="1" width="13" height="12" fill="#fffbd0" stroke="#000"/><path d="M4 13 L4 16 L8 13" fill="#fffbd0" stroke="#000"/><text x="7.5" y="11" text-anchor="middle" font-family="Liberation Sans" font-weight="bold" font-size="11" fill="#000">?</text></svg>
<svg class="a" style="left:1144px;top:694px;" width="14" height="22" viewBox="0 0 14 22"><rect x="4" y="3" width="7" height="5" fill="none" stroke="#fff"/><rect x="2" y="5" width="7" height="5" fill="#2a62dc" stroke="#fff"/><path d="M4 15 H10 L7 18 Z" fill="#fff"/></svg>
<svg class="a" style="left:1163px;top:695px;" width="18" height="20" viewBox="0 0 18 20"><circle cx="9" cy="10" r="8" fill="#4a9af8" stroke="#c8e0ff"/><path d="M11 5 L6 10 L11 15" stroke="#fff" stroke-width="2.5" fill="none"/></svg>
<svg class="a" style="left:1183px;top:696px;" width="16" height="16" viewBox="0 0 16 16"><rect x="2" y="2" width="6" height="5" fill="#4ac0a0"/><rect x="7" y="7" width="6" height="5" fill="#5a8ad0"/><circle cx="12" cy="12" r="3.5" fill="#e02020"/></svg>
<svg class="a" style="left:1200px;top:696px;" width="16" height="16" viewBox="0 0 16 16"><circle cx="8" cy="8" r="7.5" fill="#30b030"/><circle cx="8" cy="8" r="5" fill="#fff"/><circle cx="8" cy="8" r="3.5" fill="#20a020"/><circle cx="8" cy="8" r="1.5" fill="#000"/></svg>
<div class="t" style="left:1227px;top:699px;font-size:11.5px;color:#fff;">9:05 πμ</div>
</body></html>
